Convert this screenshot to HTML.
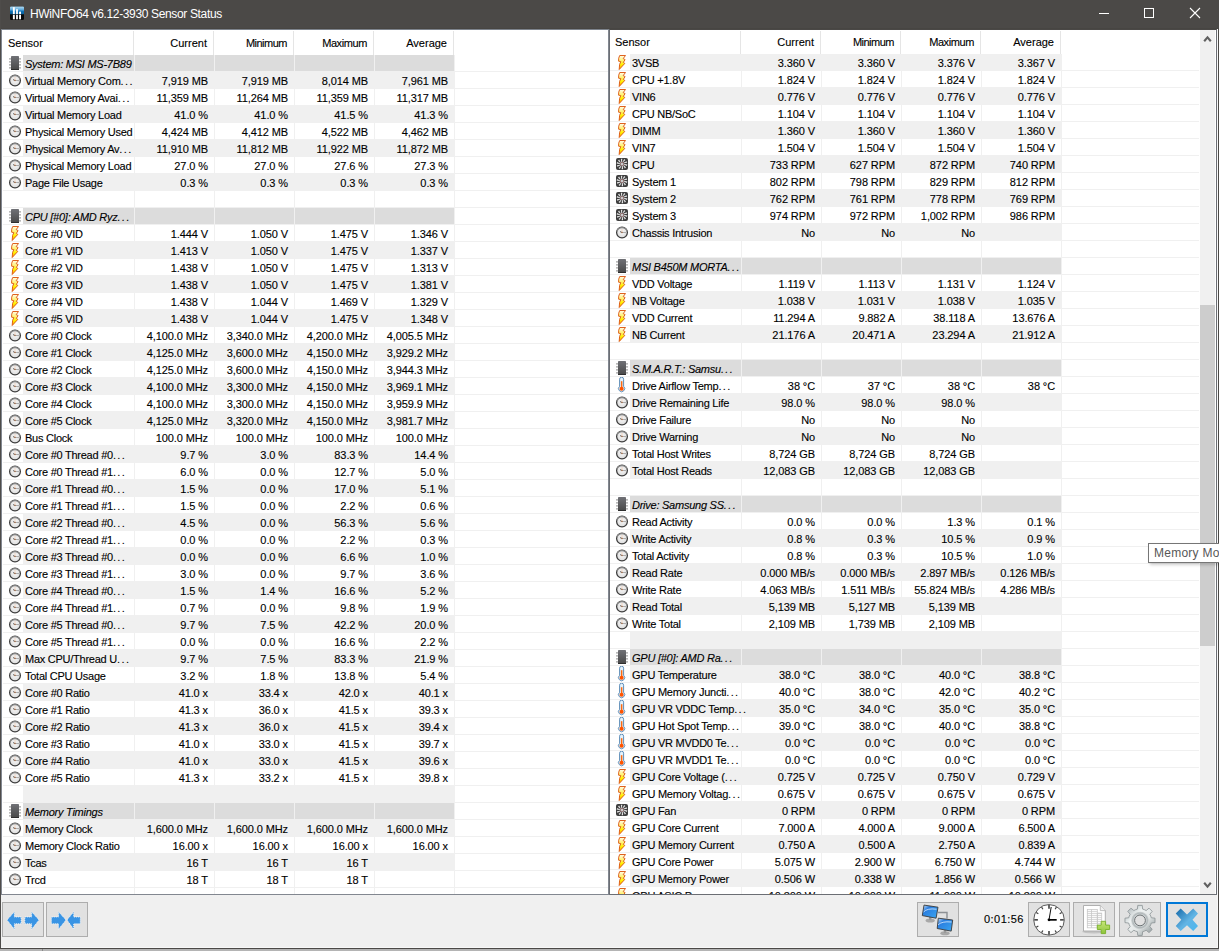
<!DOCTYPE html><html><head><meta charset="utf-8"><style>
*{margin:0;padding:0;box-sizing:border-box}
html,body{width:1219px;height:951px;overflow:hidden;background:#f0f0f0;font-family:"Liberation Sans",sans-serif}
.a{position:absolute}
#title{position:absolute;left:0;top:0;width:1219px;height:30px;background:#4a4846}
#ttext{position:absolute;left:30px;top:6px;font-size:12px;color:#fff;letter-spacing:-0.35px;white-space:nowrap;line-height:16px}
.pane{position:absolute;top:30px;height:864px;background:#fff;overflow:hidden}
.ht{position:absolute;font-size:11px;letter-spacing:0px;line-height:16px;white-space:nowrap;color:#000;-webkit-text-stroke:0.12px #000}
.r{text-align:right}
.hs{position:absolute;width:1px;background:#e5e5e5}
.rw{position:absolute;height:17px;width:1200px;background:#fff;border-bottom:1px solid #f0f0f0}
.c{position:absolute;top:0;height:16px}
.ic{position:absolute;left:0;top:0}
.tx{position:absolute;top:1px;font-size:11px;letter-spacing:-0.25px;line-height:16px;white-space:nowrap;color:#000;-webkit-text-stroke:0.12px #000}
.g{font-style:italic}
.el{letter-spacing:1.4px}
.v{letter-spacing:-0.1px}
</style></head><body>

<svg width="0" height="0" style="position:absolute">
<defs>
 <linearGradient id="boltg" x1="0" y1="0" x2="0" y2="1">
  <stop offset="0" stop-color="#fffbe8"/><stop offset="0.35" stop-color="#fff27a"/><stop offset="0.65" stop-color="#fff000"/><stop offset="1" stop-color="#ff9a00"/>
 </linearGradient>
 <linearGradient id="chipg" x1="0" y1="0" x2="0" y2="1">
  <stop offset="0" stop-color="#707176"/><stop offset="1" stop-color="#484848"/>
 </linearGradient>
 <radialGradient id="clockg" cx="0.5" cy="0.45" r="0.6">
  <stop offset="0" stop-color="#fafafa"/><stop offset="1" stop-color="#d8d8d8"/>
 </radialGradient>
 <symbol id="chip" viewBox="0 0 20 16">
  <g fill="#b2b2b2"><rect x="6" y="3.1" width="2.5" height="1.5"/><rect x="6" y="6.1" width="2.5" height="1.5"/><rect x="6" y="9.1" width="2.5" height="1.5"/><rect x="6" y="12.1" width="2.5" height="1.5"/>
  <rect x="15.5" y="3.1" width="2.5" height="1.5"/><rect x="15.5" y="6.1" width="2.5" height="1.5"/><rect x="15.5" y="9.1" width="2.5" height="1.5"/><rect x="15.5" y="12.1" width="2.5" height="1.5"/></g>
  <rect x="8" y="1" width="8" height="14" rx="0.4" fill="url(#chipg)"/>
  <rect x="8" y="14" width="8" height="1" fill="#2e2e2e"/>
 </symbol>
 <symbol id="clock" viewBox="0 0 20 16">
  <circle cx="12" cy="8.5" r="5.4" fill="url(#clockg)" stroke="#3c3c3c" stroke-width="1.25"/>
  <path d="M6.9 7.2 A5.4 5.4 0 0 1 17.1 7.2" fill="none" stroke="#8a8a8a" stroke-width="1.25"/>
  <path d="M10 7.6 L12 8.4" stroke="#505050" stroke-width="0.9"/>
  <path d="M12 8.4 L16 8.6" stroke="#9a9a9a" stroke-width="0.8"/>
  <path d="M12 8.4 L12 5" stroke="#f0c8b0" stroke-width="0.7"/>
  <circle cx="12" cy="8.5" r="0.8" fill="#a07050"/>
 </symbol>
 <symbol id="bolt" viewBox="0 0 20 16">
  <path d="M9.7 1.5 L15.5 1.5 L13.2 4.6 L15.1 5.6 L13.3 8.4 L14.8 9.4 L9.2 15.5 L9.6 10.4 L10.8 7.6 L8.6 7.2 L8.7 4.2 Z" fill="url(#boltg)" stroke="#dc5a14" stroke-width="0.95" stroke-linejoin="miter"/>
 </symbol>
 <symbol id="fan" viewBox="0 0 20 16">
  <rect x="6" y="2" width="12" height="12" rx="2" fill="#3e3e3e"/>
  <g fill="#e4e4e4"><polygon points="13.88,7.74 17.37,8.56 16.91,9.99 13.86,8.40"/><polygon points="13.68,8.89 16.01,11.61 14.81,12.49 13.27,9.41"/><polygon points="12.83,9.71 13.12,13.28 11.63,13.29 12.20,9.89"/><polygon points="11.67,9.87 9.80,12.93 8.59,12.06 11.05,9.65"/><polygon points="10.63,9.32 7.32,10.70 6.86,9.28 10.26,8.77"/><polygon points="10.12,8.26 6.63,7.44 7.09,6.01 10.14,7.60"/><polygon points="10.32,7.11 7.99,4.39 9.19,3.51 10.73,6.59"/><polygon points="11.17,6.29 10.88,2.72 12.37,2.71 11.80,6.11"/><polygon points="12.33,6.13 14.20,3.07 15.41,3.94 12.95,6.35"/><polygon points="13.37,6.68 16.68,5.30 17.14,6.72 13.74,7.23"/></g>
  <circle cx="12" cy="8" r="1.6" fill="#c8d4d4" stroke="#b07070" stroke-width="0.6"/>
 </symbol>
 <symbol id="therm" viewBox="0 0 20 16">
  <path d="M9.6 2.2 A2 2 0 0 1 13.6 2.2 V9.3 A3.05 3.05 0 1 1 9.6 9.3 Z" fill="#e4f2fc" stroke="#5d8db8" stroke-width="1"/>
  <rect x="10.9" y="4.2" width="1.5" height="7" fill="#ff6a10"/>
  <circle cx="11.6" cy="11.7" r="2" fill="#ff5400"/>
 </symbol>
</defs>
</svg>

<div class="a" style="left:2px;top:30px;width:606px;height:864px;background:#fff;overflow:hidden">
<div class="a" style="left:-2px;top:-30px;width:1219px;height:951px">
<div class="ht" style="left:8px;top:35px">Sensor</div>
<div class="hs" style="left:133px;top:31px;height:24px"></div>
<div class="ht r" style="left:127px;width:80px;top:35px;letter-spacing:0px">Current</div>
<div class="hs" style="left:213px;top:31px;height:24px"></div>
<div class="ht r" style="left:207px;width:80px;top:35px;letter-spacing:-0.5px">Minimum</div>
<div class="hs" style="left:293px;top:31px;height:24px"></div>
<div class="ht r" style="left:287px;width:80px;top:35px;letter-spacing:-0.4px">Maximum</div>
<div class="hs" style="left:373px;top:31px;height:24px"></div>
<div class="ht r" style="left:367px;width:80px;top:35px;letter-spacing:0px">Average</div>
<div class="hs" style="left:453px;top:31px;height:24px"></div>
<div class="rw" style="left:3px;top:55px">
<svg class="ic" width="20" height="16"><use href="#chip"/></svg>
<div class="c" style="left:20px;width:432px;background:#f0f0f0"></div>
<div class="c" style="left:20px;width:111px;background:#dcdcdc"></div>
<div class="c" style="left:132px;width:79px;background:#dcdcdc"></div>
<div class="c" style="left:212px;width:79px;background:#dcdcdc"></div>
<div class="c" style="left:292px;width:79px;background:#dcdcdc"></div>
<div class="c" style="left:372px;width:79px;background:#dcdcdc"></div>
<div class="tx g" style="left:22px">System: MSI MS-7B89</div>
</div>
<div class="rw" style="left:3px;top:72px">
<svg class="ic" width="20" height="16"><use href="#clock"/></svg>
<div class="c" style="left:20px;width:432px;background:#f0f0f0"></div>
<div class="c" style="left:20px;width:111px;background:#f0f0f0"></div>
<div class="c" style="left:132px;width:79px;background:#f0f0f0"></div>
<div class="c" style="left:212px;width:79px;background:#f0f0f0"></div>
<div class="c" style="left:292px;width:79px;background:#f0f0f0"></div>
<div class="c" style="left:372px;width:79px;background:#f0f0f0"></div>
<div class="tx" style="left:22px">Virtual Memory Com<span class="el">...</span></div>
<div class="tx r v" style="left:115px;width:90px">7,919 MB</div>
<div class="tx r v" style="left:195px;width:90px">7,919 MB</div>
<div class="tx r v" style="left:275px;width:90px">8,014 MB</div>
<div class="tx r v" style="left:355px;width:90px">7,961 MB</div>
</div>
<div class="rw" style="left:3px;top:89px">
<svg class="ic" width="20" height="16"><use href="#clock"/></svg>
<div class="c" style="left:20px;width:432px;background:#f0f0f0"></div>
<div class="c" style="left:20px;width:111px;background:#fff"></div>
<div class="c" style="left:132px;width:79px;background:#fff"></div>
<div class="c" style="left:212px;width:79px;background:#fff"></div>
<div class="c" style="left:292px;width:79px;background:#fff"></div>
<div class="c" style="left:372px;width:79px;background:#fff"></div>
<div class="tx" style="left:22px">Virtual Memory Avai<span class="el">...</span></div>
<div class="tx r v" style="left:115px;width:90px">11,359 MB</div>
<div class="tx r v" style="left:195px;width:90px">11,264 MB</div>
<div class="tx r v" style="left:275px;width:90px">11,359 MB</div>
<div class="tx r v" style="left:355px;width:90px">11,317 MB</div>
</div>
<div class="rw" style="left:3px;top:106px">
<svg class="ic" width="20" height="16"><use href="#clock"/></svg>
<div class="c" style="left:20px;width:432px;background:#f0f0f0"></div>
<div class="c" style="left:20px;width:111px;background:#f0f0f0"></div>
<div class="c" style="left:132px;width:79px;background:#f0f0f0"></div>
<div class="c" style="left:212px;width:79px;background:#f0f0f0"></div>
<div class="c" style="left:292px;width:79px;background:#f0f0f0"></div>
<div class="c" style="left:372px;width:79px;background:#f0f0f0"></div>
<div class="tx" style="left:22px">Virtual Memory Load</div>
<div class="tx r v" style="left:115px;width:90px">41.0 %</div>
<div class="tx r v" style="left:195px;width:90px">41.0 %</div>
<div class="tx r v" style="left:275px;width:90px">41.5 %</div>
<div class="tx r v" style="left:355px;width:90px">41.3 %</div>
</div>
<div class="rw" style="left:3px;top:123px">
<svg class="ic" width="20" height="16"><use href="#clock"/></svg>
<div class="c" style="left:20px;width:432px;background:#f0f0f0"></div>
<div class="c" style="left:20px;width:111px;background:#fff"></div>
<div class="c" style="left:132px;width:79px;background:#fff"></div>
<div class="c" style="left:212px;width:79px;background:#fff"></div>
<div class="c" style="left:292px;width:79px;background:#fff"></div>
<div class="c" style="left:372px;width:79px;background:#fff"></div>
<div class="tx" style="left:22px">Physical Memory Used</div>
<div class="tx r v" style="left:115px;width:90px">4,424 MB</div>
<div class="tx r v" style="left:195px;width:90px">4,412 MB</div>
<div class="tx r v" style="left:275px;width:90px">4,522 MB</div>
<div class="tx r v" style="left:355px;width:90px">4,462 MB</div>
</div>
<div class="rw" style="left:3px;top:140px">
<svg class="ic" width="20" height="16"><use href="#clock"/></svg>
<div class="c" style="left:20px;width:432px;background:#f0f0f0"></div>
<div class="c" style="left:20px;width:111px;background:#f0f0f0"></div>
<div class="c" style="left:132px;width:79px;background:#f0f0f0"></div>
<div class="c" style="left:212px;width:79px;background:#f0f0f0"></div>
<div class="c" style="left:292px;width:79px;background:#f0f0f0"></div>
<div class="c" style="left:372px;width:79px;background:#f0f0f0"></div>
<div class="tx" style="left:22px">Physical Memory Av<span class="el">...</span></div>
<div class="tx r v" style="left:115px;width:90px">11,910 MB</div>
<div class="tx r v" style="left:195px;width:90px">11,812 MB</div>
<div class="tx r v" style="left:275px;width:90px">11,922 MB</div>
<div class="tx r v" style="left:355px;width:90px">11,872 MB</div>
</div>
<div class="rw" style="left:3px;top:157px">
<svg class="ic" width="20" height="16"><use href="#clock"/></svg>
<div class="c" style="left:20px;width:432px;background:#f0f0f0"></div>
<div class="c" style="left:20px;width:111px;background:#fff"></div>
<div class="c" style="left:132px;width:79px;background:#fff"></div>
<div class="c" style="left:212px;width:79px;background:#fff"></div>
<div class="c" style="left:292px;width:79px;background:#fff"></div>
<div class="c" style="left:372px;width:79px;background:#fff"></div>
<div class="tx" style="left:22px">Physical Memory Load</div>
<div class="tx r v" style="left:115px;width:90px">27.0 %</div>
<div class="tx r v" style="left:195px;width:90px">27.0 %</div>
<div class="tx r v" style="left:275px;width:90px">27.6 %</div>
<div class="tx r v" style="left:355px;width:90px">27.3 %</div>
</div>
<div class="rw" style="left:3px;top:174px">
<svg class="ic" width="20" height="16"><use href="#clock"/></svg>
<div class="c" style="left:20px;width:432px;background:#f0f0f0"></div>
<div class="c" style="left:20px;width:111px;background:#f0f0f0"></div>
<div class="c" style="left:132px;width:79px;background:#f0f0f0"></div>
<div class="c" style="left:212px;width:79px;background:#f0f0f0"></div>
<div class="c" style="left:292px;width:79px;background:#f0f0f0"></div>
<div class="c" style="left:372px;width:79px;background:#f0f0f0"></div>
<div class="tx" style="left:22px">Page File Usage</div>
<div class="tx r v" style="left:115px;width:90px">0.3 %</div>
<div class="tx r v" style="left:195px;width:90px">0.3 %</div>
<div class="tx r v" style="left:275px;width:90px">0.3 %</div>
<div class="tx r v" style="left:355px;width:90px">0.3 %</div>
</div>
<div class="rw" style="left:3px;top:191px">
<div class="c" style="left:20px;width:432px;background:#f0f0f0"></div>
<div class="c" style="left:20px;width:111px;background:#fff"></div>
<div class="c" style="left:132px;width:79px;background:#fff"></div>
<div class="c" style="left:212px;width:79px;background:#fff"></div>
<div class="c" style="left:292px;width:79px;background:#fff"></div>
<div class="c" style="left:372px;width:79px;background:#fff"></div>
</div>
<div class="rw" style="left:3px;top:208px">
<svg class="ic" width="20" height="16"><use href="#chip"/></svg>
<div class="c" style="left:20px;width:432px;background:#f0f0f0"></div>
<div class="c" style="left:20px;width:111px;background:#dcdcdc"></div>
<div class="c" style="left:132px;width:79px;background:#dcdcdc"></div>
<div class="c" style="left:212px;width:79px;background:#dcdcdc"></div>
<div class="c" style="left:292px;width:79px;background:#dcdcdc"></div>
<div class="c" style="left:372px;width:79px;background:#dcdcdc"></div>
<div class="tx g" style="left:22px">CPU [#0]: AMD Ryz<span class="el">...</span></div>
</div>
<div class="rw" style="left:3px;top:225px">
<svg class="ic" width="20" height="16"><use href="#bolt"/></svg>
<div class="c" style="left:20px;width:432px;background:#f0f0f0"></div>
<div class="c" style="left:20px;width:111px;background:#fff"></div>
<div class="c" style="left:132px;width:79px;background:#fff"></div>
<div class="c" style="left:212px;width:79px;background:#fff"></div>
<div class="c" style="left:292px;width:79px;background:#fff"></div>
<div class="c" style="left:372px;width:79px;background:#fff"></div>
<div class="tx" style="left:22px">Core #0 VID</div>
<div class="tx r v" style="left:115px;width:90px">1.444 V</div>
<div class="tx r v" style="left:195px;width:90px">1.050 V</div>
<div class="tx r v" style="left:275px;width:90px">1.475 V</div>
<div class="tx r v" style="left:355px;width:90px">1.346 V</div>
</div>
<div class="rw" style="left:3px;top:242px">
<svg class="ic" width="20" height="16"><use href="#bolt"/></svg>
<div class="c" style="left:20px;width:432px;background:#f0f0f0"></div>
<div class="c" style="left:20px;width:111px;background:#f0f0f0"></div>
<div class="c" style="left:132px;width:79px;background:#f0f0f0"></div>
<div class="c" style="left:212px;width:79px;background:#f0f0f0"></div>
<div class="c" style="left:292px;width:79px;background:#f0f0f0"></div>
<div class="c" style="left:372px;width:79px;background:#f0f0f0"></div>
<div class="tx" style="left:22px">Core #1 VID</div>
<div class="tx r v" style="left:115px;width:90px">1.413 V</div>
<div class="tx r v" style="left:195px;width:90px">1.050 V</div>
<div class="tx r v" style="left:275px;width:90px">1.475 V</div>
<div class="tx r v" style="left:355px;width:90px">1.337 V</div>
</div>
<div class="rw" style="left:3px;top:259px">
<svg class="ic" width="20" height="16"><use href="#bolt"/></svg>
<div class="c" style="left:20px;width:432px;background:#f0f0f0"></div>
<div class="c" style="left:20px;width:111px;background:#fff"></div>
<div class="c" style="left:132px;width:79px;background:#fff"></div>
<div class="c" style="left:212px;width:79px;background:#fff"></div>
<div class="c" style="left:292px;width:79px;background:#fff"></div>
<div class="c" style="left:372px;width:79px;background:#fff"></div>
<div class="tx" style="left:22px">Core #2 VID</div>
<div class="tx r v" style="left:115px;width:90px">1.438 V</div>
<div class="tx r v" style="left:195px;width:90px">1.050 V</div>
<div class="tx r v" style="left:275px;width:90px">1.475 V</div>
<div class="tx r v" style="left:355px;width:90px">1.313 V</div>
</div>
<div class="rw" style="left:3px;top:276px">
<svg class="ic" width="20" height="16"><use href="#bolt"/></svg>
<div class="c" style="left:20px;width:432px;background:#f0f0f0"></div>
<div class="c" style="left:20px;width:111px;background:#f0f0f0"></div>
<div class="c" style="left:132px;width:79px;background:#f0f0f0"></div>
<div class="c" style="left:212px;width:79px;background:#f0f0f0"></div>
<div class="c" style="left:292px;width:79px;background:#f0f0f0"></div>
<div class="c" style="left:372px;width:79px;background:#f0f0f0"></div>
<div class="tx" style="left:22px">Core #3 VID</div>
<div class="tx r v" style="left:115px;width:90px">1.438 V</div>
<div class="tx r v" style="left:195px;width:90px">1.050 V</div>
<div class="tx r v" style="left:275px;width:90px">1.475 V</div>
<div class="tx r v" style="left:355px;width:90px">1.381 V</div>
</div>
<div class="rw" style="left:3px;top:293px">
<svg class="ic" width="20" height="16"><use href="#bolt"/></svg>
<div class="c" style="left:20px;width:432px;background:#f0f0f0"></div>
<div class="c" style="left:20px;width:111px;background:#fff"></div>
<div class="c" style="left:132px;width:79px;background:#fff"></div>
<div class="c" style="left:212px;width:79px;background:#fff"></div>
<div class="c" style="left:292px;width:79px;background:#fff"></div>
<div class="c" style="left:372px;width:79px;background:#fff"></div>
<div class="tx" style="left:22px">Core #4 VID</div>
<div class="tx r v" style="left:115px;width:90px">1.438 V</div>
<div class="tx r v" style="left:195px;width:90px">1.044 V</div>
<div class="tx r v" style="left:275px;width:90px">1.469 V</div>
<div class="tx r v" style="left:355px;width:90px">1.329 V</div>
</div>
<div class="rw" style="left:3px;top:310px">
<svg class="ic" width="20" height="16"><use href="#bolt"/></svg>
<div class="c" style="left:20px;width:432px;background:#f0f0f0"></div>
<div class="c" style="left:20px;width:111px;background:#f0f0f0"></div>
<div class="c" style="left:132px;width:79px;background:#f0f0f0"></div>
<div class="c" style="left:212px;width:79px;background:#f0f0f0"></div>
<div class="c" style="left:292px;width:79px;background:#f0f0f0"></div>
<div class="c" style="left:372px;width:79px;background:#f0f0f0"></div>
<div class="tx" style="left:22px">Core #5 VID</div>
<div class="tx r v" style="left:115px;width:90px">1.438 V</div>
<div class="tx r v" style="left:195px;width:90px">1.044 V</div>
<div class="tx r v" style="left:275px;width:90px">1.475 V</div>
<div class="tx r v" style="left:355px;width:90px">1.348 V</div>
</div>
<div class="rw" style="left:3px;top:327px">
<svg class="ic" width="20" height="16"><use href="#clock"/></svg>
<div class="c" style="left:20px;width:432px;background:#f0f0f0"></div>
<div class="c" style="left:20px;width:111px;background:#fff"></div>
<div class="c" style="left:132px;width:79px;background:#fff"></div>
<div class="c" style="left:212px;width:79px;background:#fff"></div>
<div class="c" style="left:292px;width:79px;background:#fff"></div>
<div class="c" style="left:372px;width:79px;background:#fff"></div>
<div class="tx" style="left:22px">Core #0 Clock</div>
<div class="tx r v" style="left:115px;width:90px">4,100.0 MHz</div>
<div class="tx r v" style="left:195px;width:90px">3,340.0 MHz</div>
<div class="tx r v" style="left:275px;width:90px">4,200.0 MHz</div>
<div class="tx r v" style="left:355px;width:90px">4,005.5 MHz</div>
</div>
<div class="rw" style="left:3px;top:344px">
<svg class="ic" width="20" height="16"><use href="#clock"/></svg>
<div class="c" style="left:20px;width:432px;background:#f0f0f0"></div>
<div class="c" style="left:20px;width:111px;background:#f0f0f0"></div>
<div class="c" style="left:132px;width:79px;background:#f0f0f0"></div>
<div class="c" style="left:212px;width:79px;background:#f0f0f0"></div>
<div class="c" style="left:292px;width:79px;background:#f0f0f0"></div>
<div class="c" style="left:372px;width:79px;background:#f0f0f0"></div>
<div class="tx" style="left:22px">Core #1 Clock</div>
<div class="tx r v" style="left:115px;width:90px">4,125.0 MHz</div>
<div class="tx r v" style="left:195px;width:90px">3,600.0 MHz</div>
<div class="tx r v" style="left:275px;width:90px">4,150.0 MHz</div>
<div class="tx r v" style="left:355px;width:90px">3,929.2 MHz</div>
</div>
<div class="rw" style="left:3px;top:361px">
<svg class="ic" width="20" height="16"><use href="#clock"/></svg>
<div class="c" style="left:20px;width:432px;background:#f0f0f0"></div>
<div class="c" style="left:20px;width:111px;background:#fff"></div>
<div class="c" style="left:132px;width:79px;background:#fff"></div>
<div class="c" style="left:212px;width:79px;background:#fff"></div>
<div class="c" style="left:292px;width:79px;background:#fff"></div>
<div class="c" style="left:372px;width:79px;background:#fff"></div>
<div class="tx" style="left:22px">Core #2 Clock</div>
<div class="tx r v" style="left:115px;width:90px">4,125.0 MHz</div>
<div class="tx r v" style="left:195px;width:90px">3,600.0 MHz</div>
<div class="tx r v" style="left:275px;width:90px">4,150.0 MHz</div>
<div class="tx r v" style="left:355px;width:90px">3,944.3 MHz</div>
</div>
<div class="rw" style="left:3px;top:378px">
<svg class="ic" width="20" height="16"><use href="#clock"/></svg>
<div class="c" style="left:20px;width:432px;background:#f0f0f0"></div>
<div class="c" style="left:20px;width:111px;background:#f0f0f0"></div>
<div class="c" style="left:132px;width:79px;background:#f0f0f0"></div>
<div class="c" style="left:212px;width:79px;background:#f0f0f0"></div>
<div class="c" style="left:292px;width:79px;background:#f0f0f0"></div>
<div class="c" style="left:372px;width:79px;background:#f0f0f0"></div>
<div class="tx" style="left:22px">Core #3 Clock</div>
<div class="tx r v" style="left:115px;width:90px">4,100.0 MHz</div>
<div class="tx r v" style="left:195px;width:90px">3,300.0 MHz</div>
<div class="tx r v" style="left:275px;width:90px">4,150.0 MHz</div>
<div class="tx r v" style="left:355px;width:90px">3,969.1 MHz</div>
</div>
<div class="rw" style="left:3px;top:395px">
<svg class="ic" width="20" height="16"><use href="#clock"/></svg>
<div class="c" style="left:20px;width:432px;background:#f0f0f0"></div>
<div class="c" style="left:20px;width:111px;background:#fff"></div>
<div class="c" style="left:132px;width:79px;background:#fff"></div>
<div class="c" style="left:212px;width:79px;background:#fff"></div>
<div class="c" style="left:292px;width:79px;background:#fff"></div>
<div class="c" style="left:372px;width:79px;background:#fff"></div>
<div class="tx" style="left:22px">Core #4 Clock</div>
<div class="tx r v" style="left:115px;width:90px">4,100.0 MHz</div>
<div class="tx r v" style="left:195px;width:90px">3,300.0 MHz</div>
<div class="tx r v" style="left:275px;width:90px">4,150.0 MHz</div>
<div class="tx r v" style="left:355px;width:90px">3,959.9 MHz</div>
</div>
<div class="rw" style="left:3px;top:412px">
<svg class="ic" width="20" height="16"><use href="#clock"/></svg>
<div class="c" style="left:20px;width:432px;background:#f0f0f0"></div>
<div class="c" style="left:20px;width:111px;background:#f0f0f0"></div>
<div class="c" style="left:132px;width:79px;background:#f0f0f0"></div>
<div class="c" style="left:212px;width:79px;background:#f0f0f0"></div>
<div class="c" style="left:292px;width:79px;background:#f0f0f0"></div>
<div class="c" style="left:372px;width:79px;background:#f0f0f0"></div>
<div class="tx" style="left:22px">Core #5 Clock</div>
<div class="tx r v" style="left:115px;width:90px">4,125.0 MHz</div>
<div class="tx r v" style="left:195px;width:90px">3,320.0 MHz</div>
<div class="tx r v" style="left:275px;width:90px">4,150.0 MHz</div>
<div class="tx r v" style="left:355px;width:90px">3,981.7 MHz</div>
</div>
<div class="rw" style="left:3px;top:429px">
<svg class="ic" width="20" height="16"><use href="#clock"/></svg>
<div class="c" style="left:20px;width:432px;background:#f0f0f0"></div>
<div class="c" style="left:20px;width:111px;background:#fff"></div>
<div class="c" style="left:132px;width:79px;background:#fff"></div>
<div class="c" style="left:212px;width:79px;background:#fff"></div>
<div class="c" style="left:292px;width:79px;background:#fff"></div>
<div class="c" style="left:372px;width:79px;background:#fff"></div>
<div class="tx" style="left:22px">Bus Clock</div>
<div class="tx r v" style="left:115px;width:90px">100.0 MHz</div>
<div class="tx r v" style="left:195px;width:90px">100.0 MHz</div>
<div class="tx r v" style="left:275px;width:90px">100.0 MHz</div>
<div class="tx r v" style="left:355px;width:90px">100.0 MHz</div>
</div>
<div class="rw" style="left:3px;top:446px">
<svg class="ic" width="20" height="16"><use href="#clock"/></svg>
<div class="c" style="left:20px;width:432px;background:#f0f0f0"></div>
<div class="c" style="left:20px;width:111px;background:#f0f0f0"></div>
<div class="c" style="left:132px;width:79px;background:#f0f0f0"></div>
<div class="c" style="left:212px;width:79px;background:#f0f0f0"></div>
<div class="c" style="left:292px;width:79px;background:#f0f0f0"></div>
<div class="c" style="left:372px;width:79px;background:#f0f0f0"></div>
<div class="tx" style="left:22px">Core #0 Thread #0<span class="el">...</span></div>
<div class="tx r v" style="left:115px;width:90px">9.7 %</div>
<div class="tx r v" style="left:195px;width:90px">3.0 %</div>
<div class="tx r v" style="left:275px;width:90px">83.3 %</div>
<div class="tx r v" style="left:355px;width:90px">14.4 %</div>
</div>
<div class="rw" style="left:3px;top:463px">
<svg class="ic" width="20" height="16"><use href="#clock"/></svg>
<div class="c" style="left:20px;width:432px;background:#f0f0f0"></div>
<div class="c" style="left:20px;width:111px;background:#fff"></div>
<div class="c" style="left:132px;width:79px;background:#fff"></div>
<div class="c" style="left:212px;width:79px;background:#fff"></div>
<div class="c" style="left:292px;width:79px;background:#fff"></div>
<div class="c" style="left:372px;width:79px;background:#fff"></div>
<div class="tx" style="left:22px">Core #0 Thread #1<span class="el">...</span></div>
<div class="tx r v" style="left:115px;width:90px">6.0 %</div>
<div class="tx r v" style="left:195px;width:90px">0.0 %</div>
<div class="tx r v" style="left:275px;width:90px">12.7 %</div>
<div class="tx r v" style="left:355px;width:90px">5.0 %</div>
</div>
<div class="rw" style="left:3px;top:480px">
<svg class="ic" width="20" height="16"><use href="#clock"/></svg>
<div class="c" style="left:20px;width:432px;background:#f0f0f0"></div>
<div class="c" style="left:20px;width:111px;background:#f0f0f0"></div>
<div class="c" style="left:132px;width:79px;background:#f0f0f0"></div>
<div class="c" style="left:212px;width:79px;background:#f0f0f0"></div>
<div class="c" style="left:292px;width:79px;background:#f0f0f0"></div>
<div class="c" style="left:372px;width:79px;background:#f0f0f0"></div>
<div class="tx" style="left:22px">Core #1 Thread #0<span class="el">...</span></div>
<div class="tx r v" style="left:115px;width:90px">1.5 %</div>
<div class="tx r v" style="left:195px;width:90px">0.0 %</div>
<div class="tx r v" style="left:275px;width:90px">17.0 %</div>
<div class="tx r v" style="left:355px;width:90px">5.1 %</div>
</div>
<div class="rw" style="left:3px;top:497px">
<svg class="ic" width="20" height="16"><use href="#clock"/></svg>
<div class="c" style="left:20px;width:432px;background:#f0f0f0"></div>
<div class="c" style="left:20px;width:111px;background:#fff"></div>
<div class="c" style="left:132px;width:79px;background:#fff"></div>
<div class="c" style="left:212px;width:79px;background:#fff"></div>
<div class="c" style="left:292px;width:79px;background:#fff"></div>
<div class="c" style="left:372px;width:79px;background:#fff"></div>
<div class="tx" style="left:22px">Core #1 Thread #1<span class="el">...</span></div>
<div class="tx r v" style="left:115px;width:90px">1.5 %</div>
<div class="tx r v" style="left:195px;width:90px">0.0 %</div>
<div class="tx r v" style="left:275px;width:90px">2.2 %</div>
<div class="tx r v" style="left:355px;width:90px">0.6 %</div>
</div>
<div class="rw" style="left:3px;top:514px">
<svg class="ic" width="20" height="16"><use href="#clock"/></svg>
<div class="c" style="left:20px;width:432px;background:#f0f0f0"></div>
<div class="c" style="left:20px;width:111px;background:#f0f0f0"></div>
<div class="c" style="left:132px;width:79px;background:#f0f0f0"></div>
<div class="c" style="left:212px;width:79px;background:#f0f0f0"></div>
<div class="c" style="left:292px;width:79px;background:#f0f0f0"></div>
<div class="c" style="left:372px;width:79px;background:#f0f0f0"></div>
<div class="tx" style="left:22px">Core #2 Thread #0<span class="el">...</span></div>
<div class="tx r v" style="left:115px;width:90px">4.5 %</div>
<div class="tx r v" style="left:195px;width:90px">0.0 %</div>
<div class="tx r v" style="left:275px;width:90px">56.3 %</div>
<div class="tx r v" style="left:355px;width:90px">5.6 %</div>
</div>
<div class="rw" style="left:3px;top:531px">
<svg class="ic" width="20" height="16"><use href="#clock"/></svg>
<div class="c" style="left:20px;width:432px;background:#f0f0f0"></div>
<div class="c" style="left:20px;width:111px;background:#fff"></div>
<div class="c" style="left:132px;width:79px;background:#fff"></div>
<div class="c" style="left:212px;width:79px;background:#fff"></div>
<div class="c" style="left:292px;width:79px;background:#fff"></div>
<div class="c" style="left:372px;width:79px;background:#fff"></div>
<div class="tx" style="left:22px">Core #2 Thread #1<span class="el">...</span></div>
<div class="tx r v" style="left:115px;width:90px">0.0 %</div>
<div class="tx r v" style="left:195px;width:90px">0.0 %</div>
<div class="tx r v" style="left:275px;width:90px">2.2 %</div>
<div class="tx r v" style="left:355px;width:90px">0.3 %</div>
</div>
<div class="rw" style="left:3px;top:548px">
<svg class="ic" width="20" height="16"><use href="#clock"/></svg>
<div class="c" style="left:20px;width:432px;background:#f0f0f0"></div>
<div class="c" style="left:20px;width:111px;background:#f0f0f0"></div>
<div class="c" style="left:132px;width:79px;background:#f0f0f0"></div>
<div class="c" style="left:212px;width:79px;background:#f0f0f0"></div>
<div class="c" style="left:292px;width:79px;background:#f0f0f0"></div>
<div class="c" style="left:372px;width:79px;background:#f0f0f0"></div>
<div class="tx" style="left:22px">Core #3 Thread #0<span class="el">...</span></div>
<div class="tx r v" style="left:115px;width:90px">0.0 %</div>
<div class="tx r v" style="left:195px;width:90px">0.0 %</div>
<div class="tx r v" style="left:275px;width:90px">6.6 %</div>
<div class="tx r v" style="left:355px;width:90px">1.0 %</div>
</div>
<div class="rw" style="left:3px;top:565px">
<svg class="ic" width="20" height="16"><use href="#clock"/></svg>
<div class="c" style="left:20px;width:432px;background:#f0f0f0"></div>
<div class="c" style="left:20px;width:111px;background:#fff"></div>
<div class="c" style="left:132px;width:79px;background:#fff"></div>
<div class="c" style="left:212px;width:79px;background:#fff"></div>
<div class="c" style="left:292px;width:79px;background:#fff"></div>
<div class="c" style="left:372px;width:79px;background:#fff"></div>
<div class="tx" style="left:22px">Core #3 Thread #1<span class="el">...</span></div>
<div class="tx r v" style="left:115px;width:90px">3.0 %</div>
<div class="tx r v" style="left:195px;width:90px">0.0 %</div>
<div class="tx r v" style="left:275px;width:90px">9.7 %</div>
<div class="tx r v" style="left:355px;width:90px">3.6 %</div>
</div>
<div class="rw" style="left:3px;top:582px">
<svg class="ic" width="20" height="16"><use href="#clock"/></svg>
<div class="c" style="left:20px;width:432px;background:#f0f0f0"></div>
<div class="c" style="left:20px;width:111px;background:#f0f0f0"></div>
<div class="c" style="left:132px;width:79px;background:#f0f0f0"></div>
<div class="c" style="left:212px;width:79px;background:#f0f0f0"></div>
<div class="c" style="left:292px;width:79px;background:#f0f0f0"></div>
<div class="c" style="left:372px;width:79px;background:#f0f0f0"></div>
<div class="tx" style="left:22px">Core #4 Thread #0<span class="el">...</span></div>
<div class="tx r v" style="left:115px;width:90px">1.5 %</div>
<div class="tx r v" style="left:195px;width:90px">1.4 %</div>
<div class="tx r v" style="left:275px;width:90px">16.6 %</div>
<div class="tx r v" style="left:355px;width:90px">5.2 %</div>
</div>
<div class="rw" style="left:3px;top:599px">
<svg class="ic" width="20" height="16"><use href="#clock"/></svg>
<div class="c" style="left:20px;width:432px;background:#f0f0f0"></div>
<div class="c" style="left:20px;width:111px;background:#fff"></div>
<div class="c" style="left:132px;width:79px;background:#fff"></div>
<div class="c" style="left:212px;width:79px;background:#fff"></div>
<div class="c" style="left:292px;width:79px;background:#fff"></div>
<div class="c" style="left:372px;width:79px;background:#fff"></div>
<div class="tx" style="left:22px">Core #4 Thread #1<span class="el">...</span></div>
<div class="tx r v" style="left:115px;width:90px">0.7 %</div>
<div class="tx r v" style="left:195px;width:90px">0.0 %</div>
<div class="tx r v" style="left:275px;width:90px">9.8 %</div>
<div class="tx r v" style="left:355px;width:90px">1.9 %</div>
</div>
<div class="rw" style="left:3px;top:616px">
<svg class="ic" width="20" height="16"><use href="#clock"/></svg>
<div class="c" style="left:20px;width:432px;background:#f0f0f0"></div>
<div class="c" style="left:20px;width:111px;background:#f0f0f0"></div>
<div class="c" style="left:132px;width:79px;background:#f0f0f0"></div>
<div class="c" style="left:212px;width:79px;background:#f0f0f0"></div>
<div class="c" style="left:292px;width:79px;background:#f0f0f0"></div>
<div class="c" style="left:372px;width:79px;background:#f0f0f0"></div>
<div class="tx" style="left:22px">Core #5 Thread #0<span class="el">...</span></div>
<div class="tx r v" style="left:115px;width:90px">9.7 %</div>
<div class="tx r v" style="left:195px;width:90px">7.5 %</div>
<div class="tx r v" style="left:275px;width:90px">42.2 %</div>
<div class="tx r v" style="left:355px;width:90px">20.0 %</div>
</div>
<div class="rw" style="left:3px;top:633px">
<svg class="ic" width="20" height="16"><use href="#clock"/></svg>
<div class="c" style="left:20px;width:432px;background:#f0f0f0"></div>
<div class="c" style="left:20px;width:111px;background:#fff"></div>
<div class="c" style="left:132px;width:79px;background:#fff"></div>
<div class="c" style="left:212px;width:79px;background:#fff"></div>
<div class="c" style="left:292px;width:79px;background:#fff"></div>
<div class="c" style="left:372px;width:79px;background:#fff"></div>
<div class="tx" style="left:22px">Core #5 Thread #1<span class="el">...</span></div>
<div class="tx r v" style="left:115px;width:90px">0.0 %</div>
<div class="tx r v" style="left:195px;width:90px">0.0 %</div>
<div class="tx r v" style="left:275px;width:90px">16.6 %</div>
<div class="tx r v" style="left:355px;width:90px">2.2 %</div>
</div>
<div class="rw" style="left:3px;top:650px">
<svg class="ic" width="20" height="16"><use href="#clock"/></svg>
<div class="c" style="left:20px;width:432px;background:#f0f0f0"></div>
<div class="c" style="left:20px;width:111px;background:#f0f0f0"></div>
<div class="c" style="left:132px;width:79px;background:#f0f0f0"></div>
<div class="c" style="left:212px;width:79px;background:#f0f0f0"></div>
<div class="c" style="left:292px;width:79px;background:#f0f0f0"></div>
<div class="c" style="left:372px;width:79px;background:#f0f0f0"></div>
<div class="tx" style="left:22px">Max CPU/Thread U<span class="el">...</span></div>
<div class="tx r v" style="left:115px;width:90px">9.7 %</div>
<div class="tx r v" style="left:195px;width:90px">7.5 %</div>
<div class="tx r v" style="left:275px;width:90px">83.3 %</div>
<div class="tx r v" style="left:355px;width:90px">21.9 %</div>
</div>
<div class="rw" style="left:3px;top:667px">
<svg class="ic" width="20" height="16"><use href="#clock"/></svg>
<div class="c" style="left:20px;width:432px;background:#f0f0f0"></div>
<div class="c" style="left:20px;width:111px;background:#fff"></div>
<div class="c" style="left:132px;width:79px;background:#fff"></div>
<div class="c" style="left:212px;width:79px;background:#fff"></div>
<div class="c" style="left:292px;width:79px;background:#fff"></div>
<div class="c" style="left:372px;width:79px;background:#fff"></div>
<div class="tx" style="left:22px">Total CPU Usage</div>
<div class="tx r v" style="left:115px;width:90px">3.2 %</div>
<div class="tx r v" style="left:195px;width:90px">1.8 %</div>
<div class="tx r v" style="left:275px;width:90px">13.8 %</div>
<div class="tx r v" style="left:355px;width:90px">5.4 %</div>
</div>
<div class="rw" style="left:3px;top:684px">
<svg class="ic" width="20" height="16"><use href="#clock"/></svg>
<div class="c" style="left:20px;width:432px;background:#f0f0f0"></div>
<div class="c" style="left:20px;width:111px;background:#f0f0f0"></div>
<div class="c" style="left:132px;width:79px;background:#f0f0f0"></div>
<div class="c" style="left:212px;width:79px;background:#f0f0f0"></div>
<div class="c" style="left:292px;width:79px;background:#f0f0f0"></div>
<div class="c" style="left:372px;width:79px;background:#f0f0f0"></div>
<div class="tx" style="left:22px">Core #0 Ratio</div>
<div class="tx r v" style="left:115px;width:90px">41.0 x</div>
<div class="tx r v" style="left:195px;width:90px">33.4 x</div>
<div class="tx r v" style="left:275px;width:90px">42.0 x</div>
<div class="tx r v" style="left:355px;width:90px">40.1 x</div>
</div>
<div class="rw" style="left:3px;top:701px">
<svg class="ic" width="20" height="16"><use href="#clock"/></svg>
<div class="c" style="left:20px;width:432px;background:#f0f0f0"></div>
<div class="c" style="left:20px;width:111px;background:#fff"></div>
<div class="c" style="left:132px;width:79px;background:#fff"></div>
<div class="c" style="left:212px;width:79px;background:#fff"></div>
<div class="c" style="left:292px;width:79px;background:#fff"></div>
<div class="c" style="left:372px;width:79px;background:#fff"></div>
<div class="tx" style="left:22px">Core #1 Ratio</div>
<div class="tx r v" style="left:115px;width:90px">41.3 x</div>
<div class="tx r v" style="left:195px;width:90px">36.0 x</div>
<div class="tx r v" style="left:275px;width:90px">41.5 x</div>
<div class="tx r v" style="left:355px;width:90px">39.3 x</div>
</div>
<div class="rw" style="left:3px;top:718px">
<svg class="ic" width="20" height="16"><use href="#clock"/></svg>
<div class="c" style="left:20px;width:432px;background:#f0f0f0"></div>
<div class="c" style="left:20px;width:111px;background:#f0f0f0"></div>
<div class="c" style="left:132px;width:79px;background:#f0f0f0"></div>
<div class="c" style="left:212px;width:79px;background:#f0f0f0"></div>
<div class="c" style="left:292px;width:79px;background:#f0f0f0"></div>
<div class="c" style="left:372px;width:79px;background:#f0f0f0"></div>
<div class="tx" style="left:22px">Core #2 Ratio</div>
<div class="tx r v" style="left:115px;width:90px">41.3 x</div>
<div class="tx r v" style="left:195px;width:90px">36.0 x</div>
<div class="tx r v" style="left:275px;width:90px">41.5 x</div>
<div class="tx r v" style="left:355px;width:90px">39.4 x</div>
</div>
<div class="rw" style="left:3px;top:735px">
<svg class="ic" width="20" height="16"><use href="#clock"/></svg>
<div class="c" style="left:20px;width:432px;background:#f0f0f0"></div>
<div class="c" style="left:20px;width:111px;background:#fff"></div>
<div class="c" style="left:132px;width:79px;background:#fff"></div>
<div class="c" style="left:212px;width:79px;background:#fff"></div>
<div class="c" style="left:292px;width:79px;background:#fff"></div>
<div class="c" style="left:372px;width:79px;background:#fff"></div>
<div class="tx" style="left:22px">Core #3 Ratio</div>
<div class="tx r v" style="left:115px;width:90px">41.0 x</div>
<div class="tx r v" style="left:195px;width:90px">33.0 x</div>
<div class="tx r v" style="left:275px;width:90px">41.5 x</div>
<div class="tx r v" style="left:355px;width:90px">39.7 x</div>
</div>
<div class="rw" style="left:3px;top:752px">
<svg class="ic" width="20" height="16"><use href="#clock"/></svg>
<div class="c" style="left:20px;width:432px;background:#f0f0f0"></div>
<div class="c" style="left:20px;width:111px;background:#f0f0f0"></div>
<div class="c" style="left:132px;width:79px;background:#f0f0f0"></div>
<div class="c" style="left:212px;width:79px;background:#f0f0f0"></div>
<div class="c" style="left:292px;width:79px;background:#f0f0f0"></div>
<div class="c" style="left:372px;width:79px;background:#f0f0f0"></div>
<div class="tx" style="left:22px">Core #4 Ratio</div>
<div class="tx r v" style="left:115px;width:90px">41.0 x</div>
<div class="tx r v" style="left:195px;width:90px">33.0 x</div>
<div class="tx r v" style="left:275px;width:90px">41.5 x</div>
<div class="tx r v" style="left:355px;width:90px">39.6 x</div>
</div>
<div class="rw" style="left:3px;top:769px">
<svg class="ic" width="20" height="16"><use href="#clock"/></svg>
<div class="c" style="left:20px;width:432px;background:#f0f0f0"></div>
<div class="c" style="left:20px;width:111px;background:#fff"></div>
<div class="c" style="left:132px;width:79px;background:#fff"></div>
<div class="c" style="left:212px;width:79px;background:#fff"></div>
<div class="c" style="left:292px;width:79px;background:#fff"></div>
<div class="c" style="left:372px;width:79px;background:#fff"></div>
<div class="tx" style="left:22px">Core #5 Ratio</div>
<div class="tx r v" style="left:115px;width:90px">41.3 x</div>
<div class="tx r v" style="left:195px;width:90px">33.2 x</div>
<div class="tx r v" style="left:275px;width:90px">41.5 x</div>
<div class="tx r v" style="left:355px;width:90px">39.8 x</div>
</div>
<div class="rw" style="left:3px;top:786px">
<div class="c" style="left:20px;width:432px;background:#f0f0f0"></div>
<div class="c" style="left:20px;width:111px;background:#f0f0f0"></div>
<div class="c" style="left:132px;width:79px;background:#f0f0f0"></div>
<div class="c" style="left:212px;width:79px;background:#f0f0f0"></div>
<div class="c" style="left:292px;width:79px;background:#f0f0f0"></div>
<div class="c" style="left:372px;width:79px;background:#f0f0f0"></div>
</div>
<div class="rw" style="left:3px;top:803px">
<svg class="ic" width="20" height="16"><use href="#chip"/></svg>
<div class="c" style="left:20px;width:432px;background:#f0f0f0"></div>
<div class="c" style="left:20px;width:111px;background:#dcdcdc"></div>
<div class="c" style="left:132px;width:79px;background:#dcdcdc"></div>
<div class="c" style="left:212px;width:79px;background:#dcdcdc"></div>
<div class="c" style="left:292px;width:79px;background:#dcdcdc"></div>
<div class="c" style="left:372px;width:79px;background:#dcdcdc"></div>
<div class="tx g" style="left:22px">Memory Timings</div>
</div>
<div class="rw" style="left:3px;top:820px">
<svg class="ic" width="20" height="16"><use href="#clock"/></svg>
<div class="c" style="left:20px;width:432px;background:#f0f0f0"></div>
<div class="c" style="left:20px;width:111px;background:#f0f0f0"></div>
<div class="c" style="left:132px;width:79px;background:#f0f0f0"></div>
<div class="c" style="left:212px;width:79px;background:#f0f0f0"></div>
<div class="c" style="left:292px;width:79px;background:#f0f0f0"></div>
<div class="c" style="left:372px;width:79px;background:#f0f0f0"></div>
<div class="tx" style="left:22px">Memory Clock</div>
<div class="tx r v" style="left:115px;width:90px">1,600.0 MHz</div>
<div class="tx r v" style="left:195px;width:90px">1,600.0 MHz</div>
<div class="tx r v" style="left:275px;width:90px">1,600.0 MHz</div>
<div class="tx r v" style="left:355px;width:90px">1,600.0 MHz</div>
</div>
<div class="rw" style="left:3px;top:837px">
<svg class="ic" width="20" height="16"><use href="#clock"/></svg>
<div class="c" style="left:20px;width:432px;background:#f0f0f0"></div>
<div class="c" style="left:20px;width:111px;background:#fff"></div>
<div class="c" style="left:132px;width:79px;background:#fff"></div>
<div class="c" style="left:212px;width:79px;background:#fff"></div>
<div class="c" style="left:292px;width:79px;background:#fff"></div>
<div class="c" style="left:372px;width:79px;background:#fff"></div>
<div class="tx" style="left:22px">Memory Clock Ratio</div>
<div class="tx r v" style="left:115px;width:90px">16.00 x</div>
<div class="tx r v" style="left:195px;width:90px">16.00 x</div>
<div class="tx r v" style="left:275px;width:90px">16.00 x</div>
<div class="tx r v" style="left:355px;width:90px">16.00 x</div>
</div>
<div class="rw" style="left:3px;top:854px">
<svg class="ic" width="20" height="16"><use href="#clock"/></svg>
<div class="c" style="left:20px;width:432px;background:#f0f0f0"></div>
<div class="c" style="left:20px;width:111px;background:#f0f0f0"></div>
<div class="c" style="left:132px;width:79px;background:#f0f0f0"></div>
<div class="c" style="left:212px;width:79px;background:#f0f0f0"></div>
<div class="c" style="left:292px;width:79px;background:#f0f0f0"></div>
<div class="c" style="left:372px;width:79px;background:#f0f0f0"></div>
<div class="tx" style="left:22px">Tcas</div>
<div class="tx r v" style="left:115px;width:90px">16 T</div>
<div class="tx r v" style="left:195px;width:90px">16 T</div>
<div class="tx r v" style="left:275px;width:90px">16 T</div>
</div>
<div class="rw" style="left:3px;top:871px">
<svg class="ic" width="20" height="16"><use href="#clock"/></svg>
<div class="c" style="left:20px;width:432px;background:#f0f0f0"></div>
<div class="c" style="left:20px;width:111px;background:#fff"></div>
<div class="c" style="left:132px;width:79px;background:#fff"></div>
<div class="c" style="left:212px;width:79px;background:#fff"></div>
<div class="c" style="left:292px;width:79px;background:#fff"></div>
<div class="c" style="left:372px;width:79px;background:#fff"></div>
<div class="tx" style="left:22px">Trcd</div>
<div class="tx r v" style="left:115px;width:90px">18 T</div>
<div class="tx r v" style="left:195px;width:90px">18 T</div>
<div class="tx r v" style="left:275px;width:90px">18 T</div>
</div>
<div class="rw" style="left:3px;top:888px">
<div class="c" style="left:20px;width:432px;background:#f0f0f0"></div>
<div class="c" style="left:20px;width:111px;background:#fff"></div>
<div class="c" style="left:132px;width:79px;background:#fff"></div>
<div class="c" style="left:212px;width:79px;background:#fff"></div>
<div class="c" style="left:292px;width:79px;background:#fff"></div>
<div class="c" style="left:372px;width:79px;background:#fff"></div>
</div>
</div></div>
<div class="a" style="left:610px;top:30px;width:590px;height:864px;background:#fff;overflow:hidden">
<div class="a" style="left:-610px;top:-30px;width:1219px;height:951px">
<div class="ht" style="left:615px;top:34px">Sensor</div>
<div class="hs" style="left:740px;top:31px;height:23px"></div>
<div class="ht r" style="left:734px;width:80px;top:34px;letter-spacing:0px">Current</div>
<div class="hs" style="left:820px;top:31px;height:23px"></div>
<div class="ht r" style="left:814px;width:80px;top:34px;letter-spacing:-0.5px">Minimum</div>
<div class="hs" style="left:900px;top:31px;height:23px"></div>
<div class="ht r" style="left:894px;width:80px;top:34px;letter-spacing:-0.4px">Maximum</div>
<div class="hs" style="left:980px;top:31px;height:23px"></div>
<div class="ht r" style="left:974px;width:80px;top:34px;letter-spacing:0px">Average</div>
<div class="hs" style="left:1060px;top:31px;height:23px"></div>
<div class="rw" style="left:610px;top:54px">
<svg class="ic" width="20" height="16"><use href="#bolt"/></svg>
<div class="c" style="left:20px;width:432px;background:#f0f0f0"></div>
<div class="c" style="left:20px;width:111px;background:#f0f0f0"></div>
<div class="c" style="left:132px;width:79px;background:#f0f0f0"></div>
<div class="c" style="left:212px;width:79px;background:#f0f0f0"></div>
<div class="c" style="left:292px;width:79px;background:#f0f0f0"></div>
<div class="c" style="left:372px;width:79px;background:#f0f0f0"></div>
<div class="tx" style="left:22px">3VSB</div>
<div class="tx r v" style="left:115px;width:90px">3.360 V</div>
<div class="tx r v" style="left:195px;width:90px">3.360 V</div>
<div class="tx r v" style="left:275px;width:90px">3.376 V</div>
<div class="tx r v" style="left:355px;width:90px">3.367 V</div>
</div>
<div class="rw" style="left:610px;top:71px">
<svg class="ic" width="20" height="16"><use href="#bolt"/></svg>
<div class="c" style="left:20px;width:432px;background:#f0f0f0"></div>
<div class="c" style="left:20px;width:111px;background:#fff"></div>
<div class="c" style="left:132px;width:79px;background:#fff"></div>
<div class="c" style="left:212px;width:79px;background:#fff"></div>
<div class="c" style="left:292px;width:79px;background:#fff"></div>
<div class="c" style="left:372px;width:79px;background:#fff"></div>
<div class="tx" style="left:22px">CPU +1.8V</div>
<div class="tx r v" style="left:115px;width:90px">1.824 V</div>
<div class="tx r v" style="left:195px;width:90px">1.824 V</div>
<div class="tx r v" style="left:275px;width:90px">1.824 V</div>
<div class="tx r v" style="left:355px;width:90px">1.824 V</div>
</div>
<div class="rw" style="left:610px;top:88px">
<svg class="ic" width="20" height="16"><use href="#bolt"/></svg>
<div class="c" style="left:20px;width:432px;background:#f0f0f0"></div>
<div class="c" style="left:20px;width:111px;background:#f0f0f0"></div>
<div class="c" style="left:132px;width:79px;background:#f0f0f0"></div>
<div class="c" style="left:212px;width:79px;background:#f0f0f0"></div>
<div class="c" style="left:292px;width:79px;background:#f0f0f0"></div>
<div class="c" style="left:372px;width:79px;background:#f0f0f0"></div>
<div class="tx" style="left:22px">VIN6</div>
<div class="tx r v" style="left:115px;width:90px">0.776 V</div>
<div class="tx r v" style="left:195px;width:90px">0.776 V</div>
<div class="tx r v" style="left:275px;width:90px">0.776 V</div>
<div class="tx r v" style="left:355px;width:90px">0.776 V</div>
</div>
<div class="rw" style="left:610px;top:105px">
<svg class="ic" width="20" height="16"><use href="#bolt"/></svg>
<div class="c" style="left:20px;width:432px;background:#f0f0f0"></div>
<div class="c" style="left:20px;width:111px;background:#fff"></div>
<div class="c" style="left:132px;width:79px;background:#fff"></div>
<div class="c" style="left:212px;width:79px;background:#fff"></div>
<div class="c" style="left:292px;width:79px;background:#fff"></div>
<div class="c" style="left:372px;width:79px;background:#fff"></div>
<div class="tx" style="left:22px">CPU NB/SoC</div>
<div class="tx r v" style="left:115px;width:90px">1.104 V</div>
<div class="tx r v" style="left:195px;width:90px">1.104 V</div>
<div class="tx r v" style="left:275px;width:90px">1.104 V</div>
<div class="tx r v" style="left:355px;width:90px">1.104 V</div>
</div>
<div class="rw" style="left:610px;top:122px">
<svg class="ic" width="20" height="16"><use href="#bolt"/></svg>
<div class="c" style="left:20px;width:432px;background:#f0f0f0"></div>
<div class="c" style="left:20px;width:111px;background:#f0f0f0"></div>
<div class="c" style="left:132px;width:79px;background:#f0f0f0"></div>
<div class="c" style="left:212px;width:79px;background:#f0f0f0"></div>
<div class="c" style="left:292px;width:79px;background:#f0f0f0"></div>
<div class="c" style="left:372px;width:79px;background:#f0f0f0"></div>
<div class="tx" style="left:22px">DIMM</div>
<div class="tx r v" style="left:115px;width:90px">1.360 V</div>
<div class="tx r v" style="left:195px;width:90px">1.360 V</div>
<div class="tx r v" style="left:275px;width:90px">1.360 V</div>
<div class="tx r v" style="left:355px;width:90px">1.360 V</div>
</div>
<div class="rw" style="left:610px;top:139px">
<svg class="ic" width="20" height="16"><use href="#bolt"/></svg>
<div class="c" style="left:20px;width:432px;background:#f0f0f0"></div>
<div class="c" style="left:20px;width:111px;background:#fff"></div>
<div class="c" style="left:132px;width:79px;background:#fff"></div>
<div class="c" style="left:212px;width:79px;background:#fff"></div>
<div class="c" style="left:292px;width:79px;background:#fff"></div>
<div class="c" style="left:372px;width:79px;background:#fff"></div>
<div class="tx" style="left:22px">VIN7</div>
<div class="tx r v" style="left:115px;width:90px">1.504 V</div>
<div class="tx r v" style="left:195px;width:90px">1.504 V</div>
<div class="tx r v" style="left:275px;width:90px">1.504 V</div>
<div class="tx r v" style="left:355px;width:90px">1.504 V</div>
</div>
<div class="rw" style="left:610px;top:156px">
<svg class="ic" width="20" height="16"><use href="#fan"/></svg>
<div class="c" style="left:20px;width:432px;background:#f0f0f0"></div>
<div class="c" style="left:20px;width:111px;background:#f0f0f0"></div>
<div class="c" style="left:132px;width:79px;background:#f0f0f0"></div>
<div class="c" style="left:212px;width:79px;background:#f0f0f0"></div>
<div class="c" style="left:292px;width:79px;background:#f0f0f0"></div>
<div class="c" style="left:372px;width:79px;background:#f0f0f0"></div>
<div class="tx" style="left:22px">CPU</div>
<div class="tx r v" style="left:115px;width:90px">733 RPM</div>
<div class="tx r v" style="left:195px;width:90px">627 RPM</div>
<div class="tx r v" style="left:275px;width:90px">872 RPM</div>
<div class="tx r v" style="left:355px;width:90px">740 RPM</div>
</div>
<div class="rw" style="left:610px;top:173px">
<svg class="ic" width="20" height="16"><use href="#fan"/></svg>
<div class="c" style="left:20px;width:432px;background:#f0f0f0"></div>
<div class="c" style="left:20px;width:111px;background:#fff"></div>
<div class="c" style="left:132px;width:79px;background:#fff"></div>
<div class="c" style="left:212px;width:79px;background:#fff"></div>
<div class="c" style="left:292px;width:79px;background:#fff"></div>
<div class="c" style="left:372px;width:79px;background:#fff"></div>
<div class="tx" style="left:22px">System 1</div>
<div class="tx r v" style="left:115px;width:90px">802 RPM</div>
<div class="tx r v" style="left:195px;width:90px">798 RPM</div>
<div class="tx r v" style="left:275px;width:90px">829 RPM</div>
<div class="tx r v" style="left:355px;width:90px">812 RPM</div>
</div>
<div class="rw" style="left:610px;top:190px">
<svg class="ic" width="20" height="16"><use href="#fan"/></svg>
<div class="c" style="left:20px;width:432px;background:#f0f0f0"></div>
<div class="c" style="left:20px;width:111px;background:#f0f0f0"></div>
<div class="c" style="left:132px;width:79px;background:#f0f0f0"></div>
<div class="c" style="left:212px;width:79px;background:#f0f0f0"></div>
<div class="c" style="left:292px;width:79px;background:#f0f0f0"></div>
<div class="c" style="left:372px;width:79px;background:#f0f0f0"></div>
<div class="tx" style="left:22px">System 2</div>
<div class="tx r v" style="left:115px;width:90px">762 RPM</div>
<div class="tx r v" style="left:195px;width:90px">761 RPM</div>
<div class="tx r v" style="left:275px;width:90px">778 RPM</div>
<div class="tx r v" style="left:355px;width:90px">769 RPM</div>
</div>
<div class="rw" style="left:610px;top:207px">
<svg class="ic" width="20" height="16"><use href="#fan"/></svg>
<div class="c" style="left:20px;width:432px;background:#f0f0f0"></div>
<div class="c" style="left:20px;width:111px;background:#fff"></div>
<div class="c" style="left:132px;width:79px;background:#fff"></div>
<div class="c" style="left:212px;width:79px;background:#fff"></div>
<div class="c" style="left:292px;width:79px;background:#fff"></div>
<div class="c" style="left:372px;width:79px;background:#fff"></div>
<div class="tx" style="left:22px">System 3</div>
<div class="tx r v" style="left:115px;width:90px">974 RPM</div>
<div class="tx r v" style="left:195px;width:90px">972 RPM</div>
<div class="tx r v" style="left:275px;width:90px">1,002 RPM</div>
<div class="tx r v" style="left:355px;width:90px">986 RPM</div>
</div>
<div class="rw" style="left:610px;top:224px">
<svg class="ic" width="20" height="16"><use href="#clock"/></svg>
<div class="c" style="left:20px;width:432px;background:#f0f0f0"></div>
<div class="c" style="left:20px;width:111px;background:#f0f0f0"></div>
<div class="c" style="left:132px;width:79px;background:#f0f0f0"></div>
<div class="c" style="left:212px;width:79px;background:#f0f0f0"></div>
<div class="c" style="left:292px;width:79px;background:#f0f0f0"></div>
<div class="c" style="left:372px;width:79px;background:#f0f0f0"></div>
<div class="tx" style="left:22px">Chassis Intrusion</div>
<div class="tx r v" style="left:115px;width:90px">No</div>
<div class="tx r v" style="left:195px;width:90px">No</div>
<div class="tx r v" style="left:275px;width:90px">No</div>
</div>
<div class="rw" style="left:610px;top:241px">
<div class="c" style="left:20px;width:432px;background:#f0f0f0"></div>
<div class="c" style="left:20px;width:111px;background:#fff"></div>
<div class="c" style="left:132px;width:79px;background:#fff"></div>
<div class="c" style="left:212px;width:79px;background:#fff"></div>
<div class="c" style="left:292px;width:79px;background:#fff"></div>
<div class="c" style="left:372px;width:79px;background:#fff"></div>
</div>
<div class="rw" style="left:610px;top:258px">
<svg class="ic" width="20" height="16"><use href="#chip"/></svg>
<div class="c" style="left:20px;width:432px;background:#f0f0f0"></div>
<div class="c" style="left:20px;width:111px;background:#dcdcdc"></div>
<div class="c" style="left:132px;width:79px;background:#dcdcdc"></div>
<div class="c" style="left:212px;width:79px;background:#dcdcdc"></div>
<div class="c" style="left:292px;width:79px;background:#dcdcdc"></div>
<div class="c" style="left:372px;width:79px;background:#dcdcdc"></div>
<div class="tx g" style="left:22px">MSI B450M MORTA<span class="el">...</span></div>
</div>
<div class="rw" style="left:610px;top:275px">
<svg class="ic" width="20" height="16"><use href="#bolt"/></svg>
<div class="c" style="left:20px;width:432px;background:#f0f0f0"></div>
<div class="c" style="left:20px;width:111px;background:#fff"></div>
<div class="c" style="left:132px;width:79px;background:#fff"></div>
<div class="c" style="left:212px;width:79px;background:#fff"></div>
<div class="c" style="left:292px;width:79px;background:#fff"></div>
<div class="c" style="left:372px;width:79px;background:#fff"></div>
<div class="tx" style="left:22px">VDD Voltage</div>
<div class="tx r v" style="left:115px;width:90px">1.119 V</div>
<div class="tx r v" style="left:195px;width:90px">1.113 V</div>
<div class="tx r v" style="left:275px;width:90px">1.131 V</div>
<div class="tx r v" style="left:355px;width:90px">1.124 V</div>
</div>
<div class="rw" style="left:610px;top:292px">
<svg class="ic" width="20" height="16"><use href="#bolt"/></svg>
<div class="c" style="left:20px;width:432px;background:#f0f0f0"></div>
<div class="c" style="left:20px;width:111px;background:#f0f0f0"></div>
<div class="c" style="left:132px;width:79px;background:#f0f0f0"></div>
<div class="c" style="left:212px;width:79px;background:#f0f0f0"></div>
<div class="c" style="left:292px;width:79px;background:#f0f0f0"></div>
<div class="c" style="left:372px;width:79px;background:#f0f0f0"></div>
<div class="tx" style="left:22px">NB Voltage</div>
<div class="tx r v" style="left:115px;width:90px">1.038 V</div>
<div class="tx r v" style="left:195px;width:90px">1.031 V</div>
<div class="tx r v" style="left:275px;width:90px">1.038 V</div>
<div class="tx r v" style="left:355px;width:90px">1.035 V</div>
</div>
<div class="rw" style="left:610px;top:309px">
<svg class="ic" width="20" height="16"><use href="#bolt"/></svg>
<div class="c" style="left:20px;width:432px;background:#f0f0f0"></div>
<div class="c" style="left:20px;width:111px;background:#fff"></div>
<div class="c" style="left:132px;width:79px;background:#fff"></div>
<div class="c" style="left:212px;width:79px;background:#fff"></div>
<div class="c" style="left:292px;width:79px;background:#fff"></div>
<div class="c" style="left:372px;width:79px;background:#fff"></div>
<div class="tx" style="left:22px">VDD Current</div>
<div class="tx r v" style="left:115px;width:90px">11.294 A</div>
<div class="tx r v" style="left:195px;width:90px">9.882 A</div>
<div class="tx r v" style="left:275px;width:90px">38.118 A</div>
<div class="tx r v" style="left:355px;width:90px">13.676 A</div>
</div>
<div class="rw" style="left:610px;top:326px">
<svg class="ic" width="20" height="16"><use href="#bolt"/></svg>
<div class="c" style="left:20px;width:432px;background:#f0f0f0"></div>
<div class="c" style="left:20px;width:111px;background:#f0f0f0"></div>
<div class="c" style="left:132px;width:79px;background:#f0f0f0"></div>
<div class="c" style="left:212px;width:79px;background:#f0f0f0"></div>
<div class="c" style="left:292px;width:79px;background:#f0f0f0"></div>
<div class="c" style="left:372px;width:79px;background:#f0f0f0"></div>
<div class="tx" style="left:22px">NB Current</div>
<div class="tx r v" style="left:115px;width:90px">21.176 A</div>
<div class="tx r v" style="left:195px;width:90px">20.471 A</div>
<div class="tx r v" style="left:275px;width:90px">23.294 A</div>
<div class="tx r v" style="left:355px;width:90px">21.912 A</div>
</div>
<div class="rw" style="left:610px;top:343px">
<div class="c" style="left:20px;width:432px;background:#f0f0f0"></div>
<div class="c" style="left:20px;width:111px;background:#fff"></div>
<div class="c" style="left:132px;width:79px;background:#fff"></div>
<div class="c" style="left:212px;width:79px;background:#fff"></div>
<div class="c" style="left:292px;width:79px;background:#fff"></div>
<div class="c" style="left:372px;width:79px;background:#fff"></div>
</div>
<div class="rw" style="left:610px;top:360px">
<svg class="ic" width="20" height="16"><use href="#chip"/></svg>
<div class="c" style="left:20px;width:432px;background:#f0f0f0"></div>
<div class="c" style="left:20px;width:111px;background:#dcdcdc"></div>
<div class="c" style="left:132px;width:79px;background:#dcdcdc"></div>
<div class="c" style="left:212px;width:79px;background:#dcdcdc"></div>
<div class="c" style="left:292px;width:79px;background:#dcdcdc"></div>
<div class="c" style="left:372px;width:79px;background:#dcdcdc"></div>
<div class="tx g" style="left:22px">S.M.A.R.T.: Samsu<span class="el">...</span></div>
</div>
<div class="rw" style="left:610px;top:377px">
<svg class="ic" width="20" height="16"><use href="#therm"/></svg>
<div class="c" style="left:20px;width:432px;background:#f0f0f0"></div>
<div class="c" style="left:20px;width:111px;background:#fff"></div>
<div class="c" style="left:132px;width:79px;background:#fff"></div>
<div class="c" style="left:212px;width:79px;background:#fff"></div>
<div class="c" style="left:292px;width:79px;background:#fff"></div>
<div class="c" style="left:372px;width:79px;background:#fff"></div>
<div class="tx" style="left:22px">Drive Airflow Temp<span class="el">...</span></div>
<div class="tx r v" style="left:115px;width:90px">38 °C</div>
<div class="tx r v" style="left:195px;width:90px">37 °C</div>
<div class="tx r v" style="left:275px;width:90px">38 °C</div>
<div class="tx r v" style="left:355px;width:90px">38 °C</div>
</div>
<div class="rw" style="left:610px;top:394px">
<svg class="ic" width="20" height="16"><use href="#clock"/></svg>
<div class="c" style="left:20px;width:432px;background:#f0f0f0"></div>
<div class="c" style="left:20px;width:111px;background:#f0f0f0"></div>
<div class="c" style="left:132px;width:79px;background:#f0f0f0"></div>
<div class="c" style="left:212px;width:79px;background:#f0f0f0"></div>
<div class="c" style="left:292px;width:79px;background:#f0f0f0"></div>
<div class="c" style="left:372px;width:79px;background:#f0f0f0"></div>
<div class="tx" style="left:22px">Drive Remaining Life</div>
<div class="tx r v" style="left:115px;width:90px">98.0 %</div>
<div class="tx r v" style="left:195px;width:90px">98.0 %</div>
<div class="tx r v" style="left:275px;width:90px">98.0 %</div>
</div>
<div class="rw" style="left:610px;top:411px">
<svg class="ic" width="20" height="16"><use href="#clock"/></svg>
<div class="c" style="left:20px;width:432px;background:#f0f0f0"></div>
<div class="c" style="left:20px;width:111px;background:#fff"></div>
<div class="c" style="left:132px;width:79px;background:#fff"></div>
<div class="c" style="left:212px;width:79px;background:#fff"></div>
<div class="c" style="left:292px;width:79px;background:#fff"></div>
<div class="c" style="left:372px;width:79px;background:#fff"></div>
<div class="tx" style="left:22px">Drive Failure</div>
<div class="tx r v" style="left:115px;width:90px">No</div>
<div class="tx r v" style="left:195px;width:90px">No</div>
<div class="tx r v" style="left:275px;width:90px">No</div>
</div>
<div class="rw" style="left:610px;top:428px">
<svg class="ic" width="20" height="16"><use href="#clock"/></svg>
<div class="c" style="left:20px;width:432px;background:#f0f0f0"></div>
<div class="c" style="left:20px;width:111px;background:#f0f0f0"></div>
<div class="c" style="left:132px;width:79px;background:#f0f0f0"></div>
<div class="c" style="left:212px;width:79px;background:#f0f0f0"></div>
<div class="c" style="left:292px;width:79px;background:#f0f0f0"></div>
<div class="c" style="left:372px;width:79px;background:#f0f0f0"></div>
<div class="tx" style="left:22px">Drive Warning</div>
<div class="tx r v" style="left:115px;width:90px">No</div>
<div class="tx r v" style="left:195px;width:90px">No</div>
<div class="tx r v" style="left:275px;width:90px">No</div>
</div>
<div class="rw" style="left:610px;top:445px">
<svg class="ic" width="20" height="16"><use href="#clock"/></svg>
<div class="c" style="left:20px;width:432px;background:#f0f0f0"></div>
<div class="c" style="left:20px;width:111px;background:#fff"></div>
<div class="c" style="left:132px;width:79px;background:#fff"></div>
<div class="c" style="left:212px;width:79px;background:#fff"></div>
<div class="c" style="left:292px;width:79px;background:#fff"></div>
<div class="c" style="left:372px;width:79px;background:#fff"></div>
<div class="tx" style="left:22px">Total Host Writes</div>
<div class="tx r v" style="left:115px;width:90px">8,724 GB</div>
<div class="tx r v" style="left:195px;width:90px">8,724 GB</div>
<div class="tx r v" style="left:275px;width:90px">8,724 GB</div>
</div>
<div class="rw" style="left:610px;top:462px">
<svg class="ic" width="20" height="16"><use href="#clock"/></svg>
<div class="c" style="left:20px;width:432px;background:#f0f0f0"></div>
<div class="c" style="left:20px;width:111px;background:#f0f0f0"></div>
<div class="c" style="left:132px;width:79px;background:#f0f0f0"></div>
<div class="c" style="left:212px;width:79px;background:#f0f0f0"></div>
<div class="c" style="left:292px;width:79px;background:#f0f0f0"></div>
<div class="c" style="left:372px;width:79px;background:#f0f0f0"></div>
<div class="tx" style="left:22px">Total Host Reads</div>
<div class="tx r v" style="left:115px;width:90px">12,083 GB</div>
<div class="tx r v" style="left:195px;width:90px">12,083 GB</div>
<div class="tx r v" style="left:275px;width:90px">12,083 GB</div>
</div>
<div class="rw" style="left:610px;top:479px">
<div class="c" style="left:20px;width:432px;background:#f0f0f0"></div>
<div class="c" style="left:20px;width:111px;background:#fff"></div>
<div class="c" style="left:132px;width:79px;background:#fff"></div>
<div class="c" style="left:212px;width:79px;background:#fff"></div>
<div class="c" style="left:292px;width:79px;background:#fff"></div>
<div class="c" style="left:372px;width:79px;background:#fff"></div>
</div>
<div class="rw" style="left:610px;top:496px">
<svg class="ic" width="20" height="16"><use href="#chip"/></svg>
<div class="c" style="left:20px;width:432px;background:#f0f0f0"></div>
<div class="c" style="left:20px;width:111px;background:#dcdcdc"></div>
<div class="c" style="left:132px;width:79px;background:#dcdcdc"></div>
<div class="c" style="left:212px;width:79px;background:#dcdcdc"></div>
<div class="c" style="left:292px;width:79px;background:#dcdcdc"></div>
<div class="c" style="left:372px;width:79px;background:#dcdcdc"></div>
<div class="tx g" style="left:22px">Drive: Samsung SS<span class="el">...</span></div>
</div>
<div class="rw" style="left:610px;top:513px">
<svg class="ic" width="20" height="16"><use href="#clock"/></svg>
<div class="c" style="left:20px;width:432px;background:#f0f0f0"></div>
<div class="c" style="left:20px;width:111px;background:#fff"></div>
<div class="c" style="left:132px;width:79px;background:#fff"></div>
<div class="c" style="left:212px;width:79px;background:#fff"></div>
<div class="c" style="left:292px;width:79px;background:#fff"></div>
<div class="c" style="left:372px;width:79px;background:#fff"></div>
<div class="tx" style="left:22px">Read Activity</div>
<div class="tx r v" style="left:115px;width:90px">0.0 %</div>
<div class="tx r v" style="left:195px;width:90px">0.0 %</div>
<div class="tx r v" style="left:275px;width:90px">1.3 %</div>
<div class="tx r v" style="left:355px;width:90px">0.1 %</div>
</div>
<div class="rw" style="left:610px;top:530px">
<svg class="ic" width="20" height="16"><use href="#clock"/></svg>
<div class="c" style="left:20px;width:432px;background:#f0f0f0"></div>
<div class="c" style="left:20px;width:111px;background:#f0f0f0"></div>
<div class="c" style="left:132px;width:79px;background:#f0f0f0"></div>
<div class="c" style="left:212px;width:79px;background:#f0f0f0"></div>
<div class="c" style="left:292px;width:79px;background:#f0f0f0"></div>
<div class="c" style="left:372px;width:79px;background:#f0f0f0"></div>
<div class="tx" style="left:22px">Write Activity</div>
<div class="tx r v" style="left:115px;width:90px">0.8 %</div>
<div class="tx r v" style="left:195px;width:90px">0.3 %</div>
<div class="tx r v" style="left:275px;width:90px">10.5 %</div>
<div class="tx r v" style="left:355px;width:90px">0.9 %</div>
</div>
<div class="rw" style="left:610px;top:547px">
<svg class="ic" width="20" height="16"><use href="#clock"/></svg>
<div class="c" style="left:20px;width:432px;background:#f0f0f0"></div>
<div class="c" style="left:20px;width:111px;background:#fff"></div>
<div class="c" style="left:132px;width:79px;background:#fff"></div>
<div class="c" style="left:212px;width:79px;background:#fff"></div>
<div class="c" style="left:292px;width:79px;background:#fff"></div>
<div class="c" style="left:372px;width:79px;background:#fff"></div>
<div class="tx" style="left:22px">Total Activity</div>
<div class="tx r v" style="left:115px;width:90px">0.8 %</div>
<div class="tx r v" style="left:195px;width:90px">0.3 %</div>
<div class="tx r v" style="left:275px;width:90px">10.5 %</div>
<div class="tx r v" style="left:355px;width:90px">1.0 %</div>
</div>
<div class="rw" style="left:610px;top:564px">
<svg class="ic" width="20" height="16"><use href="#clock"/></svg>
<div class="c" style="left:20px;width:432px;background:#f0f0f0"></div>
<div class="c" style="left:20px;width:111px;background:#f0f0f0"></div>
<div class="c" style="left:132px;width:79px;background:#f0f0f0"></div>
<div class="c" style="left:212px;width:79px;background:#f0f0f0"></div>
<div class="c" style="left:292px;width:79px;background:#f0f0f0"></div>
<div class="c" style="left:372px;width:79px;background:#f0f0f0"></div>
<div class="tx" style="left:22px">Read Rate</div>
<div class="tx r v" style="left:115px;width:90px">0.000 MB/s</div>
<div class="tx r v" style="left:195px;width:90px">0.000 MB/s</div>
<div class="tx r v" style="left:275px;width:90px">2.897 MB/s</div>
<div class="tx r v" style="left:355px;width:90px">0.126 MB/s</div>
</div>
<div class="rw" style="left:610px;top:581px">
<svg class="ic" width="20" height="16"><use href="#clock"/></svg>
<div class="c" style="left:20px;width:432px;background:#f0f0f0"></div>
<div class="c" style="left:20px;width:111px;background:#fff"></div>
<div class="c" style="left:132px;width:79px;background:#fff"></div>
<div class="c" style="left:212px;width:79px;background:#fff"></div>
<div class="c" style="left:292px;width:79px;background:#fff"></div>
<div class="c" style="left:372px;width:79px;background:#fff"></div>
<div class="tx" style="left:22px">Write Rate</div>
<div class="tx r v" style="left:115px;width:90px">4.063 MB/s</div>
<div class="tx r v" style="left:195px;width:90px">1.511 MB/s</div>
<div class="tx r v" style="left:275px;width:90px">55.824 MB/s</div>
<div class="tx r v" style="left:355px;width:90px">4.286 MB/s</div>
</div>
<div class="rw" style="left:610px;top:598px">
<svg class="ic" width="20" height="16"><use href="#clock"/></svg>
<div class="c" style="left:20px;width:432px;background:#f0f0f0"></div>
<div class="c" style="left:20px;width:111px;background:#f0f0f0"></div>
<div class="c" style="left:132px;width:79px;background:#f0f0f0"></div>
<div class="c" style="left:212px;width:79px;background:#f0f0f0"></div>
<div class="c" style="left:292px;width:79px;background:#f0f0f0"></div>
<div class="c" style="left:372px;width:79px;background:#f0f0f0"></div>
<div class="tx" style="left:22px">Read Total</div>
<div class="tx r v" style="left:115px;width:90px">5,139 MB</div>
<div class="tx r v" style="left:195px;width:90px">5,127 MB</div>
<div class="tx r v" style="left:275px;width:90px">5,139 MB</div>
</div>
<div class="rw" style="left:610px;top:615px">
<svg class="ic" width="20" height="16"><use href="#clock"/></svg>
<div class="c" style="left:20px;width:432px;background:#f0f0f0"></div>
<div class="c" style="left:20px;width:111px;background:#fff"></div>
<div class="c" style="left:132px;width:79px;background:#fff"></div>
<div class="c" style="left:212px;width:79px;background:#fff"></div>
<div class="c" style="left:292px;width:79px;background:#fff"></div>
<div class="c" style="left:372px;width:79px;background:#fff"></div>
<div class="tx" style="left:22px">Write Total</div>
<div class="tx r v" style="left:115px;width:90px">2,109 MB</div>
<div class="tx r v" style="left:195px;width:90px">1,739 MB</div>
<div class="tx r v" style="left:275px;width:90px">2,109 MB</div>
</div>
<div class="rw" style="left:610px;top:632px">
<div class="c" style="left:20px;width:432px;background:#f0f0f0"></div>
<div class="c" style="left:20px;width:111px;background:#f0f0f0"></div>
<div class="c" style="left:132px;width:79px;background:#f0f0f0"></div>
<div class="c" style="left:212px;width:79px;background:#f0f0f0"></div>
<div class="c" style="left:292px;width:79px;background:#f0f0f0"></div>
<div class="c" style="left:372px;width:79px;background:#f0f0f0"></div>
</div>
<div class="rw" style="left:610px;top:649px">
<svg class="ic" width="20" height="16"><use href="#chip"/></svg>
<div class="c" style="left:20px;width:432px;background:#f0f0f0"></div>
<div class="c" style="left:20px;width:111px;background:#dcdcdc"></div>
<div class="c" style="left:132px;width:79px;background:#dcdcdc"></div>
<div class="c" style="left:212px;width:79px;background:#dcdcdc"></div>
<div class="c" style="left:292px;width:79px;background:#dcdcdc"></div>
<div class="c" style="left:372px;width:79px;background:#dcdcdc"></div>
<div class="tx g" style="left:22px">GPU [#0]: AMD Ra<span class="el">...</span></div>
</div>
<div class="rw" style="left:610px;top:666px">
<svg class="ic" width="20" height="16"><use href="#therm"/></svg>
<div class="c" style="left:20px;width:432px;background:#f0f0f0"></div>
<div class="c" style="left:20px;width:111px;background:#f0f0f0"></div>
<div class="c" style="left:132px;width:79px;background:#f0f0f0"></div>
<div class="c" style="left:212px;width:79px;background:#f0f0f0"></div>
<div class="c" style="left:292px;width:79px;background:#f0f0f0"></div>
<div class="c" style="left:372px;width:79px;background:#f0f0f0"></div>
<div class="tx" style="left:22px">GPU Temperature</div>
<div class="tx r v" style="left:115px;width:90px">38.0 °C</div>
<div class="tx r v" style="left:195px;width:90px">38.0 °C</div>
<div class="tx r v" style="left:275px;width:90px">40.0 °C</div>
<div class="tx r v" style="left:355px;width:90px">38.8 °C</div>
</div>
<div class="rw" style="left:610px;top:683px">
<svg class="ic" width="20" height="16"><use href="#therm"/></svg>
<div class="c" style="left:20px;width:432px;background:#f0f0f0"></div>
<div class="c" style="left:20px;width:111px;background:#fff"></div>
<div class="c" style="left:132px;width:79px;background:#fff"></div>
<div class="c" style="left:212px;width:79px;background:#fff"></div>
<div class="c" style="left:292px;width:79px;background:#fff"></div>
<div class="c" style="left:372px;width:79px;background:#fff"></div>
<div class="tx" style="left:22px">GPU Memory Juncti<span class="el">...</span></div>
<div class="tx r v" style="left:115px;width:90px">40.0 °C</div>
<div class="tx r v" style="left:195px;width:90px">38.0 °C</div>
<div class="tx r v" style="left:275px;width:90px">42.0 °C</div>
<div class="tx r v" style="left:355px;width:90px">40.2 °C</div>
</div>
<div class="rw" style="left:610px;top:700px">
<svg class="ic" width="20" height="16"><use href="#therm"/></svg>
<div class="c" style="left:20px;width:432px;background:#f0f0f0"></div>
<div class="c" style="left:20px;width:111px;background:#f0f0f0"></div>
<div class="c" style="left:132px;width:79px;background:#f0f0f0"></div>
<div class="c" style="left:212px;width:79px;background:#f0f0f0"></div>
<div class="c" style="left:292px;width:79px;background:#f0f0f0"></div>
<div class="c" style="left:372px;width:79px;background:#f0f0f0"></div>
<div class="tx" style="left:22px">GPU VR VDDC Temp<span class="el">...</span></div>
<div class="tx r v" style="left:115px;width:90px">35.0 °C</div>
<div class="tx r v" style="left:195px;width:90px">34.0 °C</div>
<div class="tx r v" style="left:275px;width:90px">35.0 °C</div>
<div class="tx r v" style="left:355px;width:90px">35.0 °C</div>
</div>
<div class="rw" style="left:610px;top:717px">
<svg class="ic" width="20" height="16"><use href="#therm"/></svg>
<div class="c" style="left:20px;width:432px;background:#f0f0f0"></div>
<div class="c" style="left:20px;width:111px;background:#fff"></div>
<div class="c" style="left:132px;width:79px;background:#fff"></div>
<div class="c" style="left:212px;width:79px;background:#fff"></div>
<div class="c" style="left:292px;width:79px;background:#fff"></div>
<div class="c" style="left:372px;width:79px;background:#fff"></div>
<div class="tx" style="left:22px">GPU Hot Spot Temp<span class="el">...</span></div>
<div class="tx r v" style="left:115px;width:90px">39.0 °C</div>
<div class="tx r v" style="left:195px;width:90px">38.0 °C</div>
<div class="tx r v" style="left:275px;width:90px">40.0 °C</div>
<div class="tx r v" style="left:355px;width:90px">38.8 °C</div>
</div>
<div class="rw" style="left:610px;top:734px">
<svg class="ic" width="20" height="16"><use href="#therm"/></svg>
<div class="c" style="left:20px;width:432px;background:#f0f0f0"></div>
<div class="c" style="left:20px;width:111px;background:#f0f0f0"></div>
<div class="c" style="left:132px;width:79px;background:#f0f0f0"></div>
<div class="c" style="left:212px;width:79px;background:#f0f0f0"></div>
<div class="c" style="left:292px;width:79px;background:#f0f0f0"></div>
<div class="c" style="left:372px;width:79px;background:#f0f0f0"></div>
<div class="tx" style="left:22px">GPU VR MVDD0 Te<span class="el">...</span></div>
<div class="tx r v" style="left:115px;width:90px">0.0 °C</div>
<div class="tx r v" style="left:195px;width:90px">0.0 °C</div>
<div class="tx r v" style="left:275px;width:90px">0.0 °C</div>
<div class="tx r v" style="left:355px;width:90px">0.0 °C</div>
</div>
<div class="rw" style="left:610px;top:751px">
<svg class="ic" width="20" height="16"><use href="#therm"/></svg>
<div class="c" style="left:20px;width:432px;background:#f0f0f0"></div>
<div class="c" style="left:20px;width:111px;background:#fff"></div>
<div class="c" style="left:132px;width:79px;background:#fff"></div>
<div class="c" style="left:212px;width:79px;background:#fff"></div>
<div class="c" style="left:292px;width:79px;background:#fff"></div>
<div class="c" style="left:372px;width:79px;background:#fff"></div>
<div class="tx" style="left:22px">GPU VR MVDD1 Te<span class="el">...</span></div>
<div class="tx r v" style="left:115px;width:90px">0.0 °C</div>
<div class="tx r v" style="left:195px;width:90px">0.0 °C</div>
<div class="tx r v" style="left:275px;width:90px">0.0 °C</div>
<div class="tx r v" style="left:355px;width:90px">0.0 °C</div>
</div>
<div class="rw" style="left:610px;top:768px">
<svg class="ic" width="20" height="16"><use href="#bolt"/></svg>
<div class="c" style="left:20px;width:432px;background:#f0f0f0"></div>
<div class="c" style="left:20px;width:111px;background:#f0f0f0"></div>
<div class="c" style="left:132px;width:79px;background:#f0f0f0"></div>
<div class="c" style="left:212px;width:79px;background:#f0f0f0"></div>
<div class="c" style="left:292px;width:79px;background:#f0f0f0"></div>
<div class="c" style="left:372px;width:79px;background:#f0f0f0"></div>
<div class="tx" style="left:22px">GPU Core Voltage (<span class="el">...</span></div>
<div class="tx r v" style="left:115px;width:90px">0.725 V</div>
<div class="tx r v" style="left:195px;width:90px">0.725 V</div>
<div class="tx r v" style="left:275px;width:90px">0.750 V</div>
<div class="tx r v" style="left:355px;width:90px">0.729 V</div>
</div>
<div class="rw" style="left:610px;top:785px">
<svg class="ic" width="20" height="16"><use href="#bolt"/></svg>
<div class="c" style="left:20px;width:432px;background:#f0f0f0"></div>
<div class="c" style="left:20px;width:111px;background:#fff"></div>
<div class="c" style="left:132px;width:79px;background:#fff"></div>
<div class="c" style="left:212px;width:79px;background:#fff"></div>
<div class="c" style="left:292px;width:79px;background:#fff"></div>
<div class="c" style="left:372px;width:79px;background:#fff"></div>
<div class="tx" style="left:22px">GPU Memory Voltag<span class="el">...</span></div>
<div class="tx r v" style="left:115px;width:90px">0.675 V</div>
<div class="tx r v" style="left:195px;width:90px">0.675 V</div>
<div class="tx r v" style="left:275px;width:90px">0.675 V</div>
<div class="tx r v" style="left:355px;width:90px">0.675 V</div>
</div>
<div class="rw" style="left:610px;top:802px">
<svg class="ic" width="20" height="16"><use href="#fan"/></svg>
<div class="c" style="left:20px;width:432px;background:#f0f0f0"></div>
<div class="c" style="left:20px;width:111px;background:#f0f0f0"></div>
<div class="c" style="left:132px;width:79px;background:#f0f0f0"></div>
<div class="c" style="left:212px;width:79px;background:#f0f0f0"></div>
<div class="c" style="left:292px;width:79px;background:#f0f0f0"></div>
<div class="c" style="left:372px;width:79px;background:#f0f0f0"></div>
<div class="tx" style="left:22px">GPU Fan</div>
<div class="tx r v" style="left:115px;width:90px">0 RPM</div>
<div class="tx r v" style="left:195px;width:90px">0 RPM</div>
<div class="tx r v" style="left:275px;width:90px">0 RPM</div>
<div class="tx r v" style="left:355px;width:90px">0 RPM</div>
</div>
<div class="rw" style="left:610px;top:819px">
<svg class="ic" width="20" height="16"><use href="#bolt"/></svg>
<div class="c" style="left:20px;width:432px;background:#f0f0f0"></div>
<div class="c" style="left:20px;width:111px;background:#fff"></div>
<div class="c" style="left:132px;width:79px;background:#fff"></div>
<div class="c" style="left:212px;width:79px;background:#fff"></div>
<div class="c" style="left:292px;width:79px;background:#fff"></div>
<div class="c" style="left:372px;width:79px;background:#fff"></div>
<div class="tx" style="left:22px">GPU Core Current</div>
<div class="tx r v" style="left:115px;width:90px">7.000 A</div>
<div class="tx r v" style="left:195px;width:90px">4.000 A</div>
<div class="tx r v" style="left:275px;width:90px">9.000 A</div>
<div class="tx r v" style="left:355px;width:90px">6.500 A</div>
</div>
<div class="rw" style="left:610px;top:836px">
<svg class="ic" width="20" height="16"><use href="#bolt"/></svg>
<div class="c" style="left:20px;width:432px;background:#f0f0f0"></div>
<div class="c" style="left:20px;width:111px;background:#f0f0f0"></div>
<div class="c" style="left:132px;width:79px;background:#f0f0f0"></div>
<div class="c" style="left:212px;width:79px;background:#f0f0f0"></div>
<div class="c" style="left:292px;width:79px;background:#f0f0f0"></div>
<div class="c" style="left:372px;width:79px;background:#f0f0f0"></div>
<div class="tx" style="left:22px">GPU Memory Current</div>
<div class="tx r v" style="left:115px;width:90px">0.750 A</div>
<div class="tx r v" style="left:195px;width:90px">0.500 A</div>
<div class="tx r v" style="left:275px;width:90px">2.750 A</div>
<div class="tx r v" style="left:355px;width:90px">0.839 A</div>
</div>
<div class="rw" style="left:610px;top:853px">
<svg class="ic" width="20" height="16"><use href="#bolt"/></svg>
<div class="c" style="left:20px;width:432px;background:#f0f0f0"></div>
<div class="c" style="left:20px;width:111px;background:#fff"></div>
<div class="c" style="left:132px;width:79px;background:#fff"></div>
<div class="c" style="left:212px;width:79px;background:#fff"></div>
<div class="c" style="left:292px;width:79px;background:#fff"></div>
<div class="c" style="left:372px;width:79px;background:#fff"></div>
<div class="tx" style="left:22px">GPU Core Power</div>
<div class="tx r v" style="left:115px;width:90px">5.075 W</div>
<div class="tx r v" style="left:195px;width:90px">2.900 W</div>
<div class="tx r v" style="left:275px;width:90px">6.750 W</div>
<div class="tx r v" style="left:355px;width:90px">4.744 W</div>
</div>
<div class="rw" style="left:610px;top:870px">
<svg class="ic" width="20" height="16"><use href="#bolt"/></svg>
<div class="c" style="left:20px;width:432px;background:#f0f0f0"></div>
<div class="c" style="left:20px;width:111px;background:#f0f0f0"></div>
<div class="c" style="left:132px;width:79px;background:#f0f0f0"></div>
<div class="c" style="left:212px;width:79px;background:#f0f0f0"></div>
<div class="c" style="left:292px;width:79px;background:#f0f0f0"></div>
<div class="c" style="left:372px;width:79px;background:#f0f0f0"></div>
<div class="tx" style="left:22px">GPU Memory Power</div>
<div class="tx r v" style="left:115px;width:90px">0.506 W</div>
<div class="tx r v" style="left:195px;width:90px">0.338 W</div>
<div class="tx r v" style="left:275px;width:90px">1.856 W</div>
<div class="tx r v" style="left:355px;width:90px">0.566 W</div>
</div>
<div class="rw" style="left:610px;top:887px">
<svg class="ic" width="20" height="16"><use href="#bolt"/></svg>
<div class="c" style="left:20px;width:432px;background:#f0f0f0"></div>
<div class="c" style="left:20px;width:111px;background:#fff"></div>
<div class="c" style="left:132px;width:79px;background:#fff"></div>
<div class="c" style="left:212px;width:79px;background:#fff"></div>
<div class="c" style="left:292px;width:79px;background:#fff"></div>
<div class="c" style="left:372px;width:79px;background:#fff"></div>
<div class="tx" style="left:22px">GPU ASIC P<span class="el">...</span></div>
<div class="tx r v" style="left:115px;width:90px">10.300 W</div>
<div class="tx r v" style="left:195px;width:90px">10.000 W</div>
<div class="tx r v" style="left:275px;width:90px">11.000 W</div>
<div class="tx r v" style="left:355px;width:90px">10.300 W</div>
</div>
</div></div>
<div class="a" style="left:1px;top:29px;width:608px;height:866px;border:1px solid #828790;border-top-color:#7d838c"></div>
<div class="a" style="left:609px;top:29px;width:608px;height:866px;border:1px solid #6b6e74;border-top-color:#4a4846"></div>
<div class="a" style="left:0;top:0;width:1219px;height:29px;background:#4b4947"></div>
<div class="a" style="left:0;top:28px;width:1219px;height:1px;background:#474542"></div>
<div id="ttext">HWiNFO64 v6.12-3930 Sensor Status</div>
<svg class="a" style="left:10px;top:6px" width="14" height="14" viewBox="0 0 14 14">
<defs><linearGradient id="tig" x1="0" y1="0" x2="0" y2="1"><stop offset="0" stop-color="#b4def6"/><stop offset="0.45" stop-color="#5aa6d8"/><stop offset="0.6" stop-color="#0c72b8"/><stop offset="1" stop-color="#0a5f98"/></linearGradient></defs>
<rect x="0" y="0.5" width="14" height="13.5" rx="1.5" fill="#080808"/>
<path d="M0.8 0.5H13.2L14 1.3V8.2H0V1.3Z" fill="url(#tig)"/>
<rect x="2.9" y="1.2" width="1.9" height="7" fill="#fff"/><rect x="6.1" y="3.2" width="1.8" height="5" fill="#fff"/><rect x="9.1" y="5.6" width="1.9" height="2.6" fill="#fff"/>
<rect x="2.9" y="8.9" width="1.9" height="4.4" fill="#fff"/><rect x="6.1" y="8.9" width="1.8" height="4.4" fill="#fff"/><rect x="9.1" y="8.9" width="1.9" height="4.4" fill="#fff"/>
</svg>
<div class="a" style="left:1099px;top:13px;width:10px;height:1px;background:#fff"></div>
<div class="a" style="left:1144px;top:8px;width:10px;height:10px;border:1px solid #fff"></div>
<svg class="a" style="left:1189px;top:7px" width="12" height="12" viewBox="0 0 12 12"><path d="M1 1L11 11M11 1L1 11" stroke="#fff" stroke-width="1.1"/></svg>
<div class="a" style="left:0;top:0;width:1px;height:949px;background:#4e4c4a"></div>
<div class="a" style="left:1217px;top:29px;width:1px;height:919px;background:#f8f8f8"></div>
<div class="a" style="left:1218px;top:0;width:1px;height:949px;background:#4b4947"></div>
<div class="a" style="left:1px;top:947px;width:1217px;height:1px;background:#f8f8f8"></div>
<div class="a" style="left:0;top:948px;width:1219px;height:1px;background:#4b4947"></div>
<div class="a" style="left:0;top:949px;width:1219px;height:2px;background:#b4b4b4"></div>
<div class="a" style="left:42px;top:949px;width:1px;height:2px;background:#8a8a8a"></div>
<div class="a" style="left:1199px;top:30px;width:17px;height:864px;background:#fff"></div><div class="a" style="left:1200px;top:30px;width:15px;height:864px;background:#f0f0f0"></div>
<svg class="a" style="left:1200px;top:30px" width="16" height="17" viewBox="0 0 16 17"><path d="M4.2 11.2L7.5 7.3L10.8 11.2" fill="none" stroke="#606060" stroke-width="2.1"/></svg>
<svg class="a" style="left:1200px;top:876px" width="16" height="17" viewBox="0 0 16 17"><path d="M4.2 6.8L7.5 10.7L10.8 6.8" fill="none" stroke="#606060" stroke-width="2.1"/></svg>
<div class="a" style="left:1200px;top:305px;width:15px;height:341px;background:#cdcdcd"></div>
<div class="a" style="left:2px;top:902px;width:42px;height:35px;background:#e1e1e1;border:1px solid #adadad"></div><svg class="a" style="left:2px;top:902px" width="42" height="35" viewBox="0 0 42 35"><g fill="#3994e4" stroke="#fff" stroke-width="0.8" stroke-dasharray="1 1">
<path d="M5 18 L12.4 9.8 L12.4 15 L19.2 15 L19.2 21.8 L12.4 21.8 L12.4 27.3 Z"/>
<path d="M37 18 L29.6 9.8 L29.6 15 L22.8 15 L22.8 21.8 L29.6 21.8 L29.6 27.3 Z"/>
</g></svg><div class="a" style="left:46px;top:902px;width:42px;height:35px;background:#e1e1e1;border:1px solid #adadad"></div><svg class="a" style="left:46px;top:902px" width="42" height="35" viewBox="0 0 42 35"><g fill="#3994e4" stroke="#fff" stroke-width="0.8" stroke-dasharray="1 1">
<path d="M20 18 L12.5 9.8 L12.5 15 L5.4 15 L5.4 21.8 L12.5 21.8 L12.5 27.3 Z"/>
<path d="M21 18 L27.7 9.8 L27.7 15 L34.3 15 L34.3 21.8 L27.7 21.8 L27.7 27.3 Z"/>
</g></svg><div class="a" style="left:917px;top:902px;width:42px;height:35px;background:#e1e1e1;border:1px solid #adadad"></div><svg class="a" style="left:917px;top:902px" width="42" height="35" viewBox="0 0 42 35"><defs><linearGradient id="scr" x1="0" y1="0" x2="1" y2="1"><stop offset="0" stop-color="#d8ecff"/><stop offset="0.3" stop-color="#2a7ee0"/><stop offset="1" stop-color="#3aa6f0"/></linearGradient></defs>
<path d="M21 10.5H30V16.5" fill="none" stroke="#8c9094" stroke-width="1.4"/>
<ellipse cx="13.2" cy="18.6" rx="4.6" ry="2" fill="#a8a8a8"/><rect x="12" y="15" width="2.4" height="3" fill="#9a9a9a"/>
<path d="M7 3.1 L21 5.2 L19.1 16.2 L5.3 13.6 Z" fill="url(#scr)" stroke="#3a3a3a" stroke-width="0.9"/><path d="M6.6 10 Q10 6 19.5 7.2" fill="none" stroke="#e8f4ff" stroke-width="0.9" opacity="0.85"/>
<ellipse cx="28" cy="31.3" rx="4.6" ry="2" fill="#a8a8a8"/><rect x="26.8" y="28" width="2.4" height="3" fill="#9a9a9a"/>
<path d="M21.3 16.2 L35.7 18 L34.2 29.1 L20.2 26.5 Z" fill="url(#scr)" stroke="#3a3a3a" stroke-width="0.9"/><path d="M21 23 Q24.5 19 34.5 20" fill="none" stroke="#e8f4ff" stroke-width="0.9" opacity="0.85"/></svg><div class="a" style="left:984px;top:911px;font-size:11px;line-height:16px;color:#000;letter-spacing:0.45px;-webkit-text-stroke:0.12px #000">0:01:56</div><div class="a" style="left:1028px;top:902px;width:42px;height:35px;background:#e1e1e1;border:1px solid #adadad"></div><svg class="a" style="left:1028px;top:902px" width="42" height="35" viewBox="0 0 42 35"><circle cx="21" cy="17.85" r="15.3" fill="#fff" stroke="#5a5a5a" stroke-width="1"/><path d="M21.00 3.05L21.00 6.75" stroke="#404040" stroke-width="1.6"/><path d="M28.40 5.03L27.15 7.20" stroke="#404040" stroke-width="1.2"/><path d="M33.82 10.45L31.65 11.70" stroke="#404040" stroke-width="1.2"/><path d="M35.80 17.85L32.10 17.85" stroke="#404040" stroke-width="1.6"/><path d="M33.82 25.25L31.65 24.00" stroke="#404040" stroke-width="1.2"/><path d="M28.40 30.67L27.15 28.50" stroke="#404040" stroke-width="1.2"/><path d="M21.00 32.65L21.00 28.95" stroke="#404040" stroke-width="1.6"/><path d="M13.60 30.67L14.85 28.50" stroke="#404040" stroke-width="1.2"/><path d="M8.18 25.25L10.35 24.00" stroke="#404040" stroke-width="1.2"/><path d="M6.20 17.85L9.90 17.85" stroke="#404040" stroke-width="1.6"/><path d="M8.18 10.45L10.35 11.70" stroke="#404040" stroke-width="1.2"/><path d="M13.60 5.03L14.85 7.20" stroke="#404040" stroke-width="1.2"/>
<path d="M21 17.85L28.7 17.85" stroke="#000" stroke-width="1.7"/><path d="M21 17.85L23.2 5" stroke="#111" stroke-width="1"/><circle cx="21" cy="17.85" r="1.4" fill="#000"/></svg><div class="a" style="left:1073px;top:902px;width:42px;height:35px;background:#e1e1e1;border:1px solid #adadad"></div><svg class="a" style="left:1073px;top:902px" width="42" height="35" viewBox="0 0 42 35"><defs><linearGradient id="grn" x1="0" y1="0" x2="0" y2="1"><stop offset="0" stop-color="#c8e67a"/><stop offset="1" stop-color="#8cc43a"/></linearGradient></defs>
<ellipse cx="21" cy="29.8" rx="12" ry="1.6" fill="#b8b8b8" opacity="0.7"/>
<path d="M10.5 3.5H27.3L32.3 8.6V29H10.5Z" fill="#fff" stroke="#a8a8a8" stroke-width="0.9"/>
<path d="M27.3 3.5V8.6H32.3" fill="#f0f0f0" stroke="#b0b0b0" stroke-width="0.8"/>
<g stroke="#c8c8c8" stroke-width="0.8" fill="none">
<rect x="14.3" y="7.4" width="10" height="18.4"/><rect x="24.3" y="11.2" width="4.4" height="14.6"/>
<path d="M18.5 7.4V25.8M14.3 9.4H24.3M14.3 11.4H28.7M14.3 13.4H28.7M14.3 15.4H28.7M14.3 17.4H28.7M14.3 19.4H28.7M14.3 21.4H28.7M14.3 23.4H28.7"/>
</g>
<path d="M28.2 19.3H32.6V23.1H36.6V27.5H32.6V31.6H28.2V27.5H24.3V23.1H28.2Z" fill="url(#grn)" stroke="#78b028" stroke-width="0.9" stroke-linejoin="round"/></svg><div class="a" style="left:1119px;top:902px;width:42px;height:35px;background:#e1e1e1;border:1px solid #adadad"></div><svg class="a" style="left:1119px;top:902px" width="42" height="35" viewBox="0 0 42 35"><defs><linearGradient id="gg" x1="0" y1="0" x2="1" y2="1"><stop offset="0" stop-color="#9aa4a8"/><stop offset="0.35" stop-color="#eef2f2"/><stop offset="0.6" stop-color="#e4e8e8"/><stop offset="1" stop-color="#7c8688"/></linearGradient>
<radialGradient id="gr"><stop offset="0.55" stop-color="#f4f6f6"/><stop offset="0.8" stop-color="#a8b0b2"/><stop offset="1" stop-color="#d8dcdc"/></radialGradient></defs>
<polygon points="18.39,7.10 18.75,3.37 23.25,3.37 23.61,7.10 25.44,7.68 27.15,8.56 30.04,6.18 33.22,9.36 30.84,12.25 31.72,13.96 32.30,15.79 36.03,16.15 36.03,20.65 32.30,21.01 31.72,22.84 30.84,24.55 33.22,27.44 30.04,30.62 27.15,28.24 25.44,29.12 23.61,29.70 23.25,33.43 18.75,33.43 18.39,29.70 16.56,29.12 14.85,28.24 11.96,30.62 8.78,27.44 11.16,24.55 10.28,22.84 9.70,21.01 5.97,20.65 5.97,16.15 9.70,15.79 10.28,13.96 11.16,12.25 8.78,9.36 11.96,6.18 14.85,8.56 16.56,7.68" fill="url(#gg)" stroke="#8a9294" stroke-width="0.8" stroke-linejoin="round"/>
<circle cx="21" cy="18.4" r="9" fill="url(#gr)" opacity="0.9"/>
<circle cx="21" cy="18.4" r="5.4" fill="#e1e1e1" stroke="#6a7072" stroke-width="1"/></svg><div class="a" style="left:1166px;top:902px;width:42px;height:35px;background:#e1e1e1;border:2px solid #0078d7"></div><svg class="a" style="left:1166px;top:902px" width="42" height="35" viewBox="0 0 42 35"><defs><linearGradient id="xg" x1="0" y1="0" x2="1" y2="1"><stop offset="0" stop-color="#1468a8"/><stop offset="0.55" stop-color="#62b4e4"/><stop offset="1" stop-color="#4ab8f0"/></linearGradient></defs>
<path d="M9.75 11.6 L14.7 6.6 L21 12.5 L27.2 6.6 L32 11.6 L26.5 17.85 L32 24.1 L27.2 29.1 L21 23.2 L14.7 29.1 L9.75 24.1 L15.3 17.85 Z" fill="url(#xg)"/></svg>
<div class="a" style="left:1150px;top:545px;width:80px;height:20px;background:rgba(0,0,0,0.18);filter:blur(1.5px)"></div>
<div class="a" style="left:1148px;top:543px;width:80px;height:20px;background:#fff;border:1px solid #767676"></div>
<div class="a" style="left:1154px;top:545px;font-size:12px;line-height:16px;color:#575757;white-space:nowrap;letter-spacing:0.25px">Memory Model</div>
</body></html>
